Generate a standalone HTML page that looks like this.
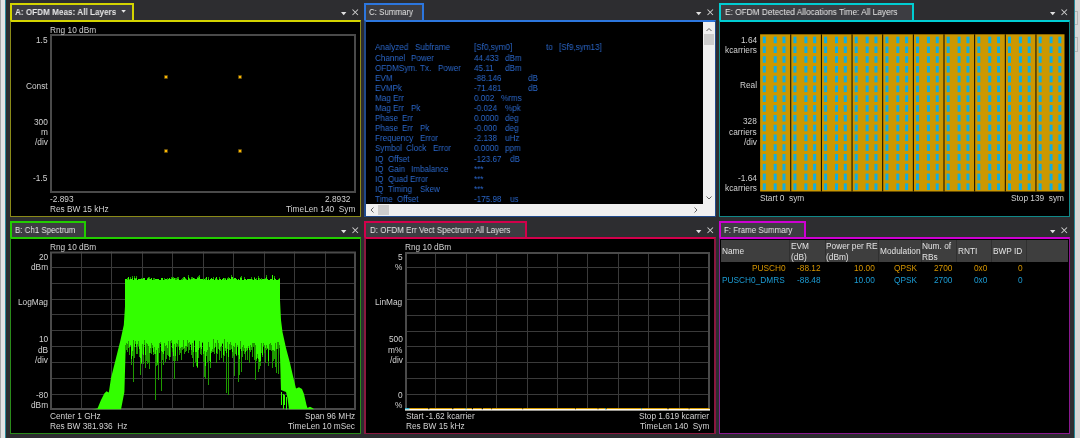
<!DOCTYPE html><html><head><meta charset="utf-8"><style>
*{margin:0;padding:0;box-sizing:border-box}
html,body{width:1080px;height:438px;overflow:hidden;background:#2d2d30;font-family:"Liberation Sans", sans-serif;}
.a{position:absolute}
.t{position:absolute;white-space:pre;line-height:10px;will-change:transform}
.tab{position:absolute;background:#3d3d42}
.ttl{position:absolute;white-space:pre;color:#e8e8e8;font-size:9px;line-height:12px;transform-origin:0 0;will-change:transform}
</style></head><body>

<div class="a" style="left:0;top:0;width:5px;height:438px;background:#e4e4e4;border-left:1px solid #a8a8a8"></div>
<div class="a" style="left:5px;top:0;width:1px;height:438px;background:#2a8a9a"></div>
<div class="a" style="left:1074px;top:0;width:1px;height:438px;background:#2a8a9a"></div>
<div class="a" style="left:1075px;top:0;width:5px;height:438px;background:#d6d6d6"></div>
<div class="a" style="left:1075px;top:11px;width:3px;height:14px;border:1px solid #b4b4b4;border-left:none"></div>
<div class="a" style="left:1075px;top:37px;width:3px;height:15px;border:1px solid #b4b4b4;border-left:none"></div>
<div class="a" style="left:10px;top:20px;width:351px;height:197px;background:#000;border:1px solid #8a8a18;border-top:2px solid #d4d400;border-bottom-width:1px"></div>
<div class="tab" style="left:10px;top:3px;width:124px;height:17px;border:2px solid #d4d400;border-bottom:none;"></div>
<div class="ttl" style="left:14.8px;top:6px;transform:scaleX(0.906);font-weight:bold;">A: OFDM Meas: All Layers</div>
<svg class="a" style="left:340px;top:8px" width="20" height="14"><path d="M1 4 L6.4 4 L3.7 7.2 Z" fill="#e0e0e0"/><path d="M12.5 1.5 L18 7 M18 1.5 L12.5 7" stroke="#d0d0d0" stroke-width="1.05"/></svg>
<svg class="a" style="left:120px;top:9px" width="8" height="6"><path d="M1.3 1 L5.9 1 L3.6 3.8 Z" fill="#e8e8e8"/></svg>
<div class="a" style="left:364px;top:20px;width:352px;height:197px;background:#000;border:2px solid #204a8c;border-top:2px solid #2c76de;border-bottom-width:1px"></div>
<div class="tab" style="left:364px;top:3px;width:60px;height:17px;border:2px solid #2c76de;border-bottom:none;"></div>
<div class="ttl" style="left:368.9px;top:6px;transform:scaleX(0.881);">C: Summary</div>
<svg class="a" style="left:695px;top:8px" width="20" height="14"><path d="M1 4 L6.4 4 L3.7 7.2 Z" fill="#e0e0e0"/><path d="M12.5 1.5 L18 7 M18 1.5 L12.5 7" stroke="#d0d0d0" stroke-width="1.05"/></svg>
<div class="a" style="left:719px;top:20px;width:351px;height:197px;background:#000;border:1px solid #108888;border-top:2px solid #00cdd2;border-bottom-width:1px"></div>
<div class="tab" style="left:719px;top:3px;width:195px;height:17px;border:2px solid #00cdd2;border-bottom:none;"></div>
<div class="ttl" style="left:724.5px;top:6px;transform:scaleX(0.92);">E: OFDM Detected Allocations Time: All Layers</div>
<svg class="a" style="left:1049px;top:8px" width="20" height="14"><path d="M1 4 L6.4 4 L3.7 7.2 Z" fill="#e0e0e0"/><path d="M12.5 1.5 L18 7 M18 1.5 L12.5 7" stroke="#d0d0d0" stroke-width="1.05"/></svg>
<div class="a" style="left:10px;top:237px;width:351px;height:197px;background:#000;border:1px solid #2a8a1a;border-top:2px solid #22cc00;border-bottom-width:1px"></div>
<div class="tab" style="left:10px;top:221px;width:76px;height:16px;border:2px solid #22cc00;border-bottom:none;"></div>
<div class="ttl" style="left:14.8px;top:224px;transform:scaleX(0.88);">B: Ch1 Spectrum</div>
<svg class="a" style="left:340px;top:226px" width="20" height="14"><path d="M1 4 L6.4 4 L3.7 7.2 Z" fill="#e0e0e0"/><path d="M12.5 1.5 L18 7 M18 1.5 L12.5 7" stroke="#d0d0d0" stroke-width="1.05"/></svg>
<div class="a" style="left:364px;top:237px;width:352px;height:197px;background:#000;border:2px solid #8a1840;border-top:2px solid #d2004b;border-bottom-width:1px"></div>
<div class="tab" style="left:364px;top:221px;width:163px;height:16px;border:2px solid #d2004b;border-bottom:none;"></div>
<div class="ttl" style="left:369.7px;top:224px;transform:scaleX(0.891);">D: OFDM Err Vect Spectrum: All Layers</div>
<svg class="a" style="left:695px;top:226px" width="20" height="14"><path d="M1 4 L6.4 4 L3.7 7.2 Z" fill="#e0e0e0"/><path d="M12.5 1.5 L18 7 M18 1.5 L12.5 7" stroke="#d0d0d0" stroke-width="1.05"/></svg>
<div class="a" style="left:719px;top:237px;width:351px;height:197px;background:#000;border:1px solid #8a1890;border-top:2px solid #cd00d2;border-bottom-width:1px"></div>
<div class="tab" style="left:719px;top:221px;width:87px;height:16px;border:2px solid #cd00d2;border-bottom:none;"></div>
<div class="ttl" style="left:724.3px;top:224px;transform:scaleX(0.881);">F: Frame Summary</div>
<svg class="a" style="left:1049px;top:226px" width="20" height="14"><path d="M1 4 L6.4 4 L3.7 7.2 Z" fill="#e0e0e0"/><path d="M12.5 1.5 L18 7 M18 1.5 L12.5 7" stroke="#d0d0d0" stroke-width="1.05"/></svg>
<div class="a" style="left:50px;top:34px;width:306px;height:159px;border:2px solid #4a4a4a"></div>
<div class="a" style="left:163.7px;top:74.7px;width:4px;height:4px;border-radius:1px;background:#6a5008"></div>
<div class="a" style="left:164.7px;top:75.7px;width:2px;height:2px;background:#ffb800"></div>
<div class="a" style="left:238.2px;top:74.7px;width:4px;height:4px;border-radius:1px;background:#6a5008"></div>
<div class="a" style="left:239.2px;top:75.7px;width:2px;height:2px;background:#ffb800"></div>
<div class="a" style="left:163.7px;top:149.2px;width:4px;height:4px;border-radius:1px;background:#6a5008"></div>
<div class="a" style="left:164.7px;top:150.2px;width:2px;height:2px;background:#ffb800"></div>
<div class="a" style="left:238.2px;top:149.2px;width:4px;height:4px;border-radius:1px;background:#6a5008"></div>
<div class="a" style="left:239.2px;top:150.2px;width:2px;height:2px;background:#ffb800"></div>
<div class="t" style="left:50.00px;top:24.82px;font-size:8.3px;color:#d2d2d2;font-weight:normal;">Rng 10 dBm</div>
<div class="t" style="right:1032.30px;top:35.12px;font-size:8.3px;color:#d2d2d2;font-weight:normal;">1.5</div>
<div class="t" style="right:1032.30px;top:80.72px;font-size:8.3px;color:#d2d2d2;font-weight:normal;">Const</div>
<div class="t" style="right:1032.30px;top:116.92px;font-size:8.3px;color:#d2d2d2;font-weight:normal;">300</div>
<div class="t" style="right:1032.30px;top:126.92px;font-size:8.3px;color:#d2d2d2;font-weight:normal;">m</div>
<div class="t" style="right:1032.30px;top:137.02px;font-size:8.3px;color:#d2d2d2;font-weight:normal;">/div</div>
<div class="t" style="right:1032.30px;top:172.72px;font-size:8.3px;color:#d2d2d2;font-weight:normal;">-1.5</div>
<div class="t" style="left:50.30px;top:193.62px;font-size:8.3px;color:#d2d2d2;font-weight:normal;">-2.893</div>
<div class="t" style="left:50.30px;top:203.72px;font-size:8.3px;color:#d2d2d2;font-weight:normal;">Res BW 15 kHz</div>
<div class="t" style="right:730.00px;top:193.62px;font-size:8.3px;color:#d2d2d2;font-weight:normal;">2.8932</div>
<div class="t" style="right:725.00px;top:203.72px;font-size:8.3px;color:#d2d2d2;font-weight:normal;">TimeLen 140  Sym</div>
<div class="a" style="left:366px;top:22px;width:337px;height:182px;overflow:hidden">
<div class="t" style="left:8.60px;top:20.48px;font-size:9px;color:#2a66c8;font-weight:normal;transform:scaleX(0.9);transform-origin:0 0;">Analyzed</div>
<div class="t" style="left:49.10px;top:20.48px;font-size:9px;color:#2a66c8;font-weight:normal;transform:scaleX(0.9);transform-origin:0 0;">Subframe</div>
<div class="t" style="left:107.90px;top:20.48px;font-size:9px;color:#2a66c8;font-weight:normal;transform:scaleX(0.9);transform-origin:0 0;">[Sf0,sym0]</div>
<div class="t" style="left:179.50px;top:20.48px;font-size:9px;color:#2a66c8;font-weight:normal;transform:scaleX(0.9);transform-origin:0 0;">to</div>
<div class="t" style="left:192.80px;top:20.48px;font-size:9px;color:#2a66c8;font-weight:normal;transform:scaleX(0.9);transform-origin:0 0;">[Sf9,sym13]</div>
<div class="t" style="left:8.60px;top:30.58px;font-size:9px;color:#2a66c8;font-weight:normal;transform:scaleX(0.9);transform-origin:0 0;">Channel</div>
<div class="t" style="left:44.90px;top:30.58px;font-size:9px;color:#2a66c8;font-weight:normal;transform:scaleX(0.9);transform-origin:0 0;">Power</div>
<div class="t" style="left:107.90px;top:30.58px;font-size:9px;color:#2a66c8;font-weight:normal;transform:scaleX(0.9);transform-origin:0 0;">44.433</div>
<div class="t" style="left:139.00px;top:30.58px;font-size:9px;color:#2a66c8;font-weight:normal;transform:scaleX(0.9);transform-origin:0 0;">dBm</div>
<div class="t" style="left:8.60px;top:40.68px;font-size:9px;color:#2a66c8;font-weight:normal;transform:scaleX(0.9);transform-origin:0 0;">OFDMSym.</div>
<div class="t" style="left:54.20px;top:40.68px;font-size:9px;color:#2a66c8;font-weight:normal;transform:scaleX(0.9);transform-origin:0 0;">Tx.</div>
<div class="t" style="left:71.90px;top:40.68px;font-size:9px;color:#2a66c8;font-weight:normal;transform:scaleX(0.9);transform-origin:0 0;">Power</div>
<div class="t" style="left:107.90px;top:40.68px;font-size:9px;color:#2a66c8;font-weight:normal;transform:scaleX(0.9);transform-origin:0 0;">45.11</div>
<div class="t" style="left:139.00px;top:40.68px;font-size:9px;color:#2a66c8;font-weight:normal;transform:scaleX(0.9);transform-origin:0 0;">dBm</div>
<div class="t" style="left:8.60px;top:50.78px;font-size:9px;color:#2a66c8;font-weight:normal;transform:scaleX(0.9);transform-origin:0 0;">EVM</div>
<div class="t" style="left:107.90px;top:50.78px;font-size:9px;color:#2a66c8;font-weight:normal;transform:scaleX(0.9);transform-origin:0 0;">-88.146</div>
<div class="t" style="left:161.80px;top:50.78px;font-size:9px;color:#2a66c8;font-weight:normal;transform:scaleX(0.9);transform-origin:0 0;">dB</div>
<div class="t" style="left:8.60px;top:60.88px;font-size:9px;color:#2a66c8;font-weight:normal;transform:scaleX(0.9);transform-origin:0 0;">EVMPk</div>
<div class="t" style="left:107.90px;top:60.88px;font-size:9px;color:#2a66c8;font-weight:normal;transform:scaleX(0.9);transform-origin:0 0;">-71.481</div>
<div class="t" style="left:161.80px;top:60.88px;font-size:9px;color:#2a66c8;font-weight:normal;transform:scaleX(0.9);transform-origin:0 0;">dB</div>
<div class="t" style="left:8.60px;top:70.98px;font-size:9px;color:#2a66c8;font-weight:normal;transform:scaleX(0.9);transform-origin:0 0;">Mag</div>
<div class="t" style="left:26.80px;top:70.98px;font-size:9px;color:#2a66c8;font-weight:normal;transform:scaleX(0.9);transform-origin:0 0;">Err</div>
<div class="t" style="left:107.90px;top:70.98px;font-size:9px;color:#2a66c8;font-weight:normal;transform:scaleX(0.9);transform-origin:0 0;">0.002</div>
<div class="t" style="left:135.30px;top:70.98px;font-size:9px;color:#2a66c8;font-weight:normal;transform:scaleX(0.9);transform-origin:0 0;">%rms</div>
<div class="t" style="left:8.60px;top:81.08px;font-size:9px;color:#2a66c8;font-weight:normal;transform:scaleX(0.9);transform-origin:0 0;">Mag</div>
<div class="t" style="left:26.80px;top:81.08px;font-size:9px;color:#2a66c8;font-weight:normal;transform:scaleX(0.9);transform-origin:0 0;">Err</div>
<div class="t" style="left:44.90px;top:81.08px;font-size:9px;color:#2a66c8;font-weight:normal;transform:scaleX(0.9);transform-origin:0 0;">Pk</div>
<div class="t" style="left:107.90px;top:81.08px;font-size:9px;color:#2a66c8;font-weight:normal;transform:scaleX(0.9);transform-origin:0 0;">-0.024</div>
<div class="t" style="left:139.10px;top:81.08px;font-size:9px;color:#2a66c8;font-weight:normal;transform:scaleX(0.9);transform-origin:0 0;">%pk</div>
<div class="t" style="left:8.60px;top:91.18px;font-size:9px;color:#2a66c8;font-weight:normal;transform:scaleX(0.9);transform-origin:0 0;">Phase</div>
<div class="t" style="left:35.70px;top:91.18px;font-size:9px;color:#2a66c8;font-weight:normal;transform:scaleX(0.9);transform-origin:0 0;">Err</div>
<div class="t" style="left:107.90px;top:91.18px;font-size:9px;color:#2a66c8;font-weight:normal;transform:scaleX(0.9);transform-origin:0 0;">0.0000</div>
<div class="t" style="left:139.10px;top:91.18px;font-size:9px;color:#2a66c8;font-weight:normal;transform:scaleX(0.9);transform-origin:0 0;">deg</div>
<div class="t" style="left:8.60px;top:101.28px;font-size:9px;color:#2a66c8;font-weight:normal;transform:scaleX(0.9);transform-origin:0 0;">Phase</div>
<div class="t" style="left:35.70px;top:101.28px;font-size:9px;color:#2a66c8;font-weight:normal;transform:scaleX(0.9);transform-origin:0 0;">Err</div>
<div class="t" style="left:53.90px;top:101.28px;font-size:9px;color:#2a66c8;font-weight:normal;transform:scaleX(0.9);transform-origin:0 0;">Pk</div>
<div class="t" style="left:107.90px;top:101.28px;font-size:9px;color:#2a66c8;font-weight:normal;transform:scaleX(0.9);transform-origin:0 0;">-0.000</div>
<div class="t" style="left:139.10px;top:101.28px;font-size:9px;color:#2a66c8;font-weight:normal;transform:scaleX(0.9);transform-origin:0 0;">deg</div>
<div class="t" style="left:8.60px;top:111.38px;font-size:9px;color:#2a66c8;font-weight:normal;transform:scaleX(0.9);transform-origin:0 0;">Frequency</div>
<div class="t" style="left:53.70px;top:111.38px;font-size:9px;color:#2a66c8;font-weight:normal;transform:scaleX(0.9);transform-origin:0 0;">Error</div>
<div class="t" style="left:107.90px;top:111.38px;font-size:9px;color:#2a66c8;font-weight:normal;transform:scaleX(0.9);transform-origin:0 0;">-2.138</div>
<div class="t" style="left:139.10px;top:111.38px;font-size:9px;color:#2a66c8;font-weight:normal;transform:scaleX(0.9);transform-origin:0 0;">uHz</div>
<div class="t" style="left:8.60px;top:121.48px;font-size:9px;color:#2a66c8;font-weight:normal;transform:scaleX(0.9);transform-origin:0 0;">Symbol</div>
<div class="t" style="left:40.00px;top:121.48px;font-size:9px;color:#2a66c8;font-weight:normal;transform:scaleX(0.9);transform-origin:0 0;">Clock</div>
<div class="t" style="left:67.00px;top:121.48px;font-size:9px;color:#2a66c8;font-weight:normal;transform:scaleX(0.9);transform-origin:0 0;">Error</div>
<div class="t" style="left:107.90px;top:121.48px;font-size:9px;color:#2a66c8;font-weight:normal;transform:scaleX(0.9);transform-origin:0 0;">0.0000</div>
<div class="t" style="left:139.00px;top:121.48px;font-size:9px;color:#2a66c8;font-weight:normal;transform:scaleX(0.9);transform-origin:0 0;">ppm</div>
<div class="t" style="left:8.60px;top:131.58px;font-size:9px;color:#2a66c8;font-weight:normal;transform:scaleX(0.9);transform-origin:0 0;">IQ</div>
<div class="t" style="left:22.00px;top:131.58px;font-size:9px;color:#2a66c8;font-weight:normal;transform:scaleX(0.9);transform-origin:0 0;">Offset</div>
<div class="t" style="left:107.90px;top:131.58px;font-size:9px;color:#2a66c8;font-weight:normal;transform:scaleX(0.9);transform-origin:0 0;">-123.67</div>
<div class="t" style="left:143.50px;top:131.58px;font-size:9px;color:#2a66c8;font-weight:normal;transform:scaleX(0.9);transform-origin:0 0;">dB</div>
<div class="t" style="left:8.60px;top:141.68px;font-size:9px;color:#2a66c8;font-weight:normal;transform:scaleX(0.9);transform-origin:0 0;">IQ</div>
<div class="t" style="left:22.00px;top:141.68px;font-size:9px;color:#2a66c8;font-weight:normal;transform:scaleX(0.9);transform-origin:0 0;">Gain</div>
<div class="t" style="left:44.60px;top:141.68px;font-size:9px;color:#2a66c8;font-weight:normal;transform:scaleX(0.9);transform-origin:0 0;">Imbalance</div>
<div class="t" style="left:107.90px;top:141.68px;font-size:9px;color:#2a66c8;font-weight:normal;transform:scaleX(0.9);transform-origin:0 0;">***</div>
<div class="t" style="left:8.60px;top:151.78px;font-size:9px;color:#2a66c8;font-weight:normal;transform:scaleX(0.9);transform-origin:0 0;">IQ</div>
<div class="t" style="left:22.00px;top:151.78px;font-size:9px;color:#2a66c8;font-weight:normal;transform:scaleX(0.9);transform-origin:0 0;">Quad</div>
<div class="t" style="left:44.00px;top:151.78px;font-size:9px;color:#2a66c8;font-weight:normal;transform:scaleX(0.9);transform-origin:0 0;">Error</div>
<div class="t" style="left:107.90px;top:151.78px;font-size:9px;color:#2a66c8;font-weight:normal;transform:scaleX(0.9);transform-origin:0 0;">***</div>
<div class="t" style="left:8.60px;top:161.88px;font-size:9px;color:#2a66c8;font-weight:normal;transform:scaleX(0.9);transform-origin:0 0;">IQ</div>
<div class="t" style="left:22.00px;top:161.88px;font-size:9px;color:#2a66c8;font-weight:normal;transform:scaleX(0.9);transform-origin:0 0;">Timing</div>
<div class="t" style="left:53.70px;top:161.88px;font-size:9px;color:#2a66c8;font-weight:normal;transform:scaleX(0.9);transform-origin:0 0;">Skew</div>
<div class="t" style="left:107.90px;top:161.88px;font-size:9px;color:#2a66c8;font-weight:normal;transform:scaleX(0.9);transform-origin:0 0;">***</div>
<div class="t" style="left:8.60px;top:171.98px;font-size:9px;color:#2a66c8;font-weight:normal;transform:scaleX(0.9);transform-origin:0 0;">Time</div>
<div class="t" style="left:31.00px;top:171.98px;font-size:9px;color:#2a66c8;font-weight:normal;transform:scaleX(0.9);transform-origin:0 0;">Offset</div>
<div class="t" style="left:107.90px;top:171.98px;font-size:9px;color:#2a66c8;font-weight:normal;transform:scaleX(0.9);transform-origin:0 0;">-175.98</div>
<div class="t" style="left:143.50px;top:171.98px;font-size:9px;color:#2a66c8;font-weight:normal;transform:scaleX(0.9);transform-origin:0 0;">us</div>
</div>
<div class="a" style="left:703px;top:22px;width:12px;height:182px;background:#f0f0f0"></div>
<div class="a" style="left:704px;top:34px;width:10px;height:11px;background:#cdcdcd"></div>
<svg class="a" style="left:703px;top:22px" width="12" height="182"><path d="M3.5 9 L6 6.5 L8.5 9" stroke="#606060" stroke-width="1" fill="none"/><path d="M3.5 174.5 L6 177 L8.5 174.5" stroke="#606060" stroke-width="1" fill="none"/></svg>
<div class="a" style="left:366px;top:204px;width:349px;height:12px;background:#f0f0f0"></div>
<div class="a" style="left:377.5px;top:205px;width:11.5px;height:10px;background:#cdcdcd"></div>
<svg class="a" style="left:366px;top:204px" width="349" height="12"><path d="M7.5 3.5 L5 6 L7.5 8.5" stroke="#606060" stroke-width="1" fill="none"/><path d="M328.5 3.5 L331 6 L328.5 8.5" stroke="#606060" stroke-width="1" fill="none"/></svg>
<svg class="a" style="left:0;top:0" width="1080" height="438"><rect x="760.1" y="34.3" width="304.4" height="157.2" fill="#cc9800"/><rect x="762.80" y="36.60" width="3" height="6.6" fill="#10aee0"/><rect x="762.80" y="46.39" width="3" height="6.6" fill="#10aee0"/><rect x="762.80" y="56.18" width="3" height="6.6" fill="#10aee0"/><rect x="762.80" y="65.97" width="3" height="6.6" fill="#10aee0"/><rect x="762.80" y="75.76" width="3" height="6.6" fill="#10aee0"/><rect x="762.80" y="85.55" width="3" height="6.6" fill="#10aee0"/><rect x="762.80" y="95.34" width="3" height="6.6" fill="#10aee0"/><rect x="762.80" y="105.13" width="3" height="6.6" fill="#10aee0"/><rect x="762.80" y="114.92" width="3" height="6.6" fill="#10aee0"/><rect x="762.80" y="124.71" width="3" height="6.6" fill="#10aee0"/><rect x="762.80" y="134.50" width="3" height="6.6" fill="#10aee0"/><rect x="762.80" y="144.29" width="3" height="6.6" fill="#10aee0"/><rect x="762.80" y="154.08" width="3" height="6.6" fill="#10aee0"/><rect x="762.80" y="163.87" width="3" height="6.6" fill="#10aee0"/><rect x="762.80" y="173.66" width="3" height="6.6" fill="#10aee0"/><rect x="762.80" y="183.45" width="3" height="6.6" fill="#10aee0"/><rect x="773.70" y="36.60" width="3" height="6.6" fill="#10aee0"/><rect x="773.70" y="46.39" width="3" height="6.6" fill="#10aee0"/><rect x="773.70" y="56.18" width="3" height="6.6" fill="#10aee0"/><rect x="773.70" y="65.97" width="3" height="6.6" fill="#10aee0"/><rect x="773.70" y="75.76" width="3" height="6.6" fill="#10aee0"/><rect x="773.70" y="85.55" width="3" height="6.6" fill="#10aee0"/><rect x="773.70" y="95.34" width="3" height="6.6" fill="#10aee0"/><rect x="773.70" y="105.13" width="3" height="6.6" fill="#10aee0"/><rect x="773.70" y="114.92" width="3" height="6.6" fill="#10aee0"/><rect x="773.70" y="124.71" width="3" height="6.6" fill="#10aee0"/><rect x="773.70" y="134.50" width="3" height="6.6" fill="#10aee0"/><rect x="773.70" y="144.29" width="3" height="6.6" fill="#10aee0"/><rect x="773.70" y="154.08" width="3" height="6.6" fill="#10aee0"/><rect x="773.70" y="163.87" width="3" height="6.6" fill="#10aee0"/><rect x="773.70" y="173.66" width="3" height="6.6" fill="#10aee0"/><rect x="773.70" y="183.45" width="3" height="6.6" fill="#10aee0"/><rect x="782.50" y="36.60" width="3" height="6.6" fill="#10aee0"/><rect x="782.50" y="46.39" width="3" height="6.6" fill="#10aee0"/><rect x="782.50" y="56.18" width="3" height="6.6" fill="#10aee0"/><rect x="782.50" y="65.97" width="3" height="6.6" fill="#10aee0"/><rect x="782.50" y="75.76" width="3" height="6.6" fill="#10aee0"/><rect x="782.50" y="85.55" width="3" height="6.6" fill="#10aee0"/><rect x="782.50" y="95.34" width="3" height="6.6" fill="#10aee0"/><rect x="782.50" y="105.13" width="3" height="6.6" fill="#10aee0"/><rect x="782.50" y="114.92" width="3" height="6.6" fill="#10aee0"/><rect x="782.50" y="124.71" width="3" height="6.6" fill="#10aee0"/><rect x="782.50" y="134.50" width="3" height="6.6" fill="#10aee0"/><rect x="782.50" y="144.29" width="3" height="6.6" fill="#10aee0"/><rect x="782.50" y="154.08" width="3" height="6.6" fill="#10aee0"/><rect x="782.50" y="163.87" width="3" height="6.6" fill="#10aee0"/><rect x="782.50" y="173.66" width="3" height="6.6" fill="#10aee0"/><rect x="782.50" y="183.45" width="3" height="6.6" fill="#10aee0"/><rect x="790.25" y="34.3" width="1" height="157.2" fill="#080500"/><rect x="793.45" y="36.60" width="3" height="6.6" fill="#10aee0"/><rect x="793.45" y="46.39" width="3" height="6.6" fill="#10aee0"/><rect x="793.45" y="56.18" width="3" height="6.6" fill="#10aee0"/><rect x="793.45" y="65.97" width="3" height="6.6" fill="#10aee0"/><rect x="793.45" y="75.76" width="3" height="6.6" fill="#10aee0"/><rect x="793.45" y="85.55" width="3" height="6.6" fill="#10aee0"/><rect x="793.45" y="95.34" width="3" height="6.6" fill="#10aee0"/><rect x="793.45" y="105.13" width="3" height="6.6" fill="#10aee0"/><rect x="793.45" y="114.92" width="3" height="6.6" fill="#10aee0"/><rect x="793.45" y="124.71" width="3" height="6.6" fill="#10aee0"/><rect x="793.45" y="134.50" width="3" height="6.6" fill="#10aee0"/><rect x="793.45" y="144.29" width="3" height="6.6" fill="#10aee0"/><rect x="793.45" y="154.08" width="3" height="6.6" fill="#10aee0"/><rect x="793.45" y="163.87" width="3" height="6.6" fill="#10aee0"/><rect x="793.45" y="173.66" width="3" height="6.6" fill="#10aee0"/><rect x="793.45" y="183.45" width="3" height="6.6" fill="#10aee0"/><rect x="804.35" y="36.60" width="3" height="6.6" fill="#10aee0"/><rect x="804.35" y="46.39" width="3" height="6.6" fill="#10aee0"/><rect x="804.35" y="56.18" width="3" height="6.6" fill="#10aee0"/><rect x="804.35" y="65.97" width="3" height="6.6" fill="#10aee0"/><rect x="804.35" y="75.76" width="3" height="6.6" fill="#10aee0"/><rect x="804.35" y="85.55" width="3" height="6.6" fill="#10aee0"/><rect x="804.35" y="95.34" width="3" height="6.6" fill="#10aee0"/><rect x="804.35" y="105.13" width="3" height="6.6" fill="#10aee0"/><rect x="804.35" y="114.92" width="3" height="6.6" fill="#10aee0"/><rect x="804.35" y="124.71" width="3" height="6.6" fill="#10aee0"/><rect x="804.35" y="134.50" width="3" height="6.6" fill="#10aee0"/><rect x="804.35" y="144.29" width="3" height="6.6" fill="#10aee0"/><rect x="804.35" y="154.08" width="3" height="6.6" fill="#10aee0"/><rect x="804.35" y="163.87" width="3" height="6.6" fill="#10aee0"/><rect x="804.35" y="173.66" width="3" height="6.6" fill="#10aee0"/><rect x="804.35" y="183.45" width="3" height="6.6" fill="#10aee0"/><rect x="813.15" y="36.60" width="3" height="6.6" fill="#10aee0"/><rect x="813.15" y="46.39" width="3" height="6.6" fill="#10aee0"/><rect x="813.15" y="56.18" width="3" height="6.6" fill="#10aee0"/><rect x="813.15" y="65.97" width="3" height="6.6" fill="#10aee0"/><rect x="813.15" y="75.76" width="3" height="6.6" fill="#10aee0"/><rect x="813.15" y="85.55" width="3" height="6.6" fill="#10aee0"/><rect x="813.15" y="95.34" width="3" height="6.6" fill="#10aee0"/><rect x="813.15" y="105.13" width="3" height="6.6" fill="#10aee0"/><rect x="813.15" y="114.92" width="3" height="6.6" fill="#10aee0"/><rect x="813.15" y="124.71" width="3" height="6.6" fill="#10aee0"/><rect x="813.15" y="134.50" width="3" height="6.6" fill="#10aee0"/><rect x="813.15" y="144.29" width="3" height="6.6" fill="#10aee0"/><rect x="813.15" y="154.08" width="3" height="6.6" fill="#10aee0"/><rect x="813.15" y="163.87" width="3" height="6.6" fill="#10aee0"/><rect x="813.15" y="173.66" width="3" height="6.6" fill="#10aee0"/><rect x="813.15" y="183.45" width="3" height="6.6" fill="#10aee0"/><rect x="820.90" y="34.3" width="1" height="157.2" fill="#080500"/><rect x="824.10" y="36.60" width="3" height="6.6" fill="#10aee0"/><rect x="824.10" y="46.39" width="3" height="6.6" fill="#10aee0"/><rect x="824.10" y="56.18" width="3" height="6.6" fill="#10aee0"/><rect x="824.10" y="65.97" width="3" height="6.6" fill="#10aee0"/><rect x="824.10" y="75.76" width="3" height="6.6" fill="#10aee0"/><rect x="824.10" y="85.55" width="3" height="6.6" fill="#10aee0"/><rect x="824.10" y="95.34" width="3" height="6.6" fill="#10aee0"/><rect x="824.10" y="105.13" width="3" height="6.6" fill="#10aee0"/><rect x="824.10" y="114.92" width="3" height="6.6" fill="#10aee0"/><rect x="824.10" y="124.71" width="3" height="6.6" fill="#10aee0"/><rect x="824.10" y="134.50" width="3" height="6.6" fill="#10aee0"/><rect x="824.10" y="144.29" width="3" height="6.6" fill="#10aee0"/><rect x="824.10" y="154.08" width="3" height="6.6" fill="#10aee0"/><rect x="824.10" y="163.87" width="3" height="6.6" fill="#10aee0"/><rect x="824.10" y="173.66" width="3" height="6.6" fill="#10aee0"/><rect x="824.10" y="183.45" width="3" height="6.6" fill="#10aee0"/><rect x="835.00" y="36.60" width="3" height="6.6" fill="#10aee0"/><rect x="835.00" y="46.39" width="3" height="6.6" fill="#10aee0"/><rect x="835.00" y="56.18" width="3" height="6.6" fill="#10aee0"/><rect x="835.00" y="65.97" width="3" height="6.6" fill="#10aee0"/><rect x="835.00" y="75.76" width="3" height="6.6" fill="#10aee0"/><rect x="835.00" y="85.55" width="3" height="6.6" fill="#10aee0"/><rect x="835.00" y="95.34" width="3" height="6.6" fill="#10aee0"/><rect x="835.00" y="105.13" width="3" height="6.6" fill="#10aee0"/><rect x="835.00" y="114.92" width="3" height="6.6" fill="#10aee0"/><rect x="835.00" y="124.71" width="3" height="6.6" fill="#10aee0"/><rect x="835.00" y="134.50" width="3" height="6.6" fill="#10aee0"/><rect x="835.00" y="144.29" width="3" height="6.6" fill="#10aee0"/><rect x="835.00" y="154.08" width="3" height="6.6" fill="#10aee0"/><rect x="835.00" y="163.87" width="3" height="6.6" fill="#10aee0"/><rect x="835.00" y="173.66" width="3" height="6.6" fill="#10aee0"/><rect x="835.00" y="183.45" width="3" height="6.6" fill="#10aee0"/><rect x="843.80" y="36.60" width="3" height="6.6" fill="#10aee0"/><rect x="843.80" y="46.39" width="3" height="6.6" fill="#10aee0"/><rect x="843.80" y="56.18" width="3" height="6.6" fill="#10aee0"/><rect x="843.80" y="65.97" width="3" height="6.6" fill="#10aee0"/><rect x="843.80" y="75.76" width="3" height="6.6" fill="#10aee0"/><rect x="843.80" y="85.55" width="3" height="6.6" fill="#10aee0"/><rect x="843.80" y="95.34" width="3" height="6.6" fill="#10aee0"/><rect x="843.80" y="105.13" width="3" height="6.6" fill="#10aee0"/><rect x="843.80" y="114.92" width="3" height="6.6" fill="#10aee0"/><rect x="843.80" y="124.71" width="3" height="6.6" fill="#10aee0"/><rect x="843.80" y="134.50" width="3" height="6.6" fill="#10aee0"/><rect x="843.80" y="144.29" width="3" height="6.6" fill="#10aee0"/><rect x="843.80" y="154.08" width="3" height="6.6" fill="#10aee0"/><rect x="843.80" y="163.87" width="3" height="6.6" fill="#10aee0"/><rect x="843.80" y="173.66" width="3" height="6.6" fill="#10aee0"/><rect x="843.80" y="183.45" width="3" height="6.6" fill="#10aee0"/><rect x="851.55" y="34.3" width="1" height="157.2" fill="#080500"/><rect x="854.75" y="36.60" width="3" height="6.6" fill="#10aee0"/><rect x="854.75" y="46.39" width="3" height="6.6" fill="#10aee0"/><rect x="854.75" y="56.18" width="3" height="6.6" fill="#10aee0"/><rect x="854.75" y="65.97" width="3" height="6.6" fill="#10aee0"/><rect x="854.75" y="75.76" width="3" height="6.6" fill="#10aee0"/><rect x="854.75" y="85.55" width="3" height="6.6" fill="#10aee0"/><rect x="854.75" y="95.34" width="3" height="6.6" fill="#10aee0"/><rect x="854.75" y="105.13" width="3" height="6.6" fill="#10aee0"/><rect x="854.75" y="114.92" width="3" height="6.6" fill="#10aee0"/><rect x="854.75" y="124.71" width="3" height="6.6" fill="#10aee0"/><rect x="854.75" y="134.50" width="3" height="6.6" fill="#10aee0"/><rect x="854.75" y="144.29" width="3" height="6.6" fill="#10aee0"/><rect x="854.75" y="154.08" width="3" height="6.6" fill="#10aee0"/><rect x="854.75" y="163.87" width="3" height="6.6" fill="#10aee0"/><rect x="854.75" y="173.66" width="3" height="6.6" fill="#10aee0"/><rect x="854.75" y="183.45" width="3" height="6.6" fill="#10aee0"/><rect x="865.65" y="36.60" width="3" height="6.6" fill="#10aee0"/><rect x="865.65" y="46.39" width="3" height="6.6" fill="#10aee0"/><rect x="865.65" y="56.18" width="3" height="6.6" fill="#10aee0"/><rect x="865.65" y="65.97" width="3" height="6.6" fill="#10aee0"/><rect x="865.65" y="75.76" width="3" height="6.6" fill="#10aee0"/><rect x="865.65" y="85.55" width="3" height="6.6" fill="#10aee0"/><rect x="865.65" y="95.34" width="3" height="6.6" fill="#10aee0"/><rect x="865.65" y="105.13" width="3" height="6.6" fill="#10aee0"/><rect x="865.65" y="114.92" width="3" height="6.6" fill="#10aee0"/><rect x="865.65" y="124.71" width="3" height="6.6" fill="#10aee0"/><rect x="865.65" y="134.50" width="3" height="6.6" fill="#10aee0"/><rect x="865.65" y="144.29" width="3" height="6.6" fill="#10aee0"/><rect x="865.65" y="154.08" width="3" height="6.6" fill="#10aee0"/><rect x="865.65" y="163.87" width="3" height="6.6" fill="#10aee0"/><rect x="865.65" y="173.66" width="3" height="6.6" fill="#10aee0"/><rect x="865.65" y="183.45" width="3" height="6.6" fill="#10aee0"/><rect x="874.45" y="36.60" width="3" height="6.6" fill="#10aee0"/><rect x="874.45" y="46.39" width="3" height="6.6" fill="#10aee0"/><rect x="874.45" y="56.18" width="3" height="6.6" fill="#10aee0"/><rect x="874.45" y="65.97" width="3" height="6.6" fill="#10aee0"/><rect x="874.45" y="75.76" width="3" height="6.6" fill="#10aee0"/><rect x="874.45" y="85.55" width="3" height="6.6" fill="#10aee0"/><rect x="874.45" y="95.34" width="3" height="6.6" fill="#10aee0"/><rect x="874.45" y="105.13" width="3" height="6.6" fill="#10aee0"/><rect x="874.45" y="114.92" width="3" height="6.6" fill="#10aee0"/><rect x="874.45" y="124.71" width="3" height="6.6" fill="#10aee0"/><rect x="874.45" y="134.50" width="3" height="6.6" fill="#10aee0"/><rect x="874.45" y="144.29" width="3" height="6.6" fill="#10aee0"/><rect x="874.45" y="154.08" width="3" height="6.6" fill="#10aee0"/><rect x="874.45" y="163.87" width="3" height="6.6" fill="#10aee0"/><rect x="874.45" y="173.66" width="3" height="6.6" fill="#10aee0"/><rect x="874.45" y="183.45" width="3" height="6.6" fill="#10aee0"/><rect x="882.20" y="34.3" width="1" height="157.2" fill="#080500"/><rect x="885.40" y="36.60" width="3" height="6.6" fill="#10aee0"/><rect x="885.40" y="46.39" width="3" height="6.6" fill="#10aee0"/><rect x="885.40" y="56.18" width="3" height="6.6" fill="#10aee0"/><rect x="885.40" y="65.97" width="3" height="6.6" fill="#10aee0"/><rect x="885.40" y="75.76" width="3" height="6.6" fill="#10aee0"/><rect x="885.40" y="85.55" width="3" height="6.6" fill="#10aee0"/><rect x="885.40" y="95.34" width="3" height="6.6" fill="#10aee0"/><rect x="885.40" y="105.13" width="3" height="6.6" fill="#10aee0"/><rect x="885.40" y="114.92" width="3" height="6.6" fill="#10aee0"/><rect x="885.40" y="124.71" width="3" height="6.6" fill="#10aee0"/><rect x="885.40" y="134.50" width="3" height="6.6" fill="#10aee0"/><rect x="885.40" y="144.29" width="3" height="6.6" fill="#10aee0"/><rect x="885.40" y="154.08" width="3" height="6.6" fill="#10aee0"/><rect x="885.40" y="163.87" width="3" height="6.6" fill="#10aee0"/><rect x="885.40" y="173.66" width="3" height="6.6" fill="#10aee0"/><rect x="885.40" y="183.45" width="3" height="6.6" fill="#10aee0"/><rect x="896.30" y="36.60" width="3" height="6.6" fill="#10aee0"/><rect x="896.30" y="46.39" width="3" height="6.6" fill="#10aee0"/><rect x="896.30" y="56.18" width="3" height="6.6" fill="#10aee0"/><rect x="896.30" y="65.97" width="3" height="6.6" fill="#10aee0"/><rect x="896.30" y="75.76" width="3" height="6.6" fill="#10aee0"/><rect x="896.30" y="85.55" width="3" height="6.6" fill="#10aee0"/><rect x="896.30" y="95.34" width="3" height="6.6" fill="#10aee0"/><rect x="896.30" y="105.13" width="3" height="6.6" fill="#10aee0"/><rect x="896.30" y="114.92" width="3" height="6.6" fill="#10aee0"/><rect x="896.30" y="124.71" width="3" height="6.6" fill="#10aee0"/><rect x="896.30" y="134.50" width="3" height="6.6" fill="#10aee0"/><rect x="896.30" y="144.29" width="3" height="6.6" fill="#10aee0"/><rect x="896.30" y="154.08" width="3" height="6.6" fill="#10aee0"/><rect x="896.30" y="163.87" width="3" height="6.6" fill="#10aee0"/><rect x="896.30" y="173.66" width="3" height="6.6" fill="#10aee0"/><rect x="896.30" y="183.45" width="3" height="6.6" fill="#10aee0"/><rect x="905.10" y="36.60" width="3" height="6.6" fill="#10aee0"/><rect x="905.10" y="46.39" width="3" height="6.6" fill="#10aee0"/><rect x="905.10" y="56.18" width="3" height="6.6" fill="#10aee0"/><rect x="905.10" y="65.97" width="3" height="6.6" fill="#10aee0"/><rect x="905.10" y="75.76" width="3" height="6.6" fill="#10aee0"/><rect x="905.10" y="85.55" width="3" height="6.6" fill="#10aee0"/><rect x="905.10" y="95.34" width="3" height="6.6" fill="#10aee0"/><rect x="905.10" y="105.13" width="3" height="6.6" fill="#10aee0"/><rect x="905.10" y="114.92" width="3" height="6.6" fill="#10aee0"/><rect x="905.10" y="124.71" width="3" height="6.6" fill="#10aee0"/><rect x="905.10" y="134.50" width="3" height="6.6" fill="#10aee0"/><rect x="905.10" y="144.29" width="3" height="6.6" fill="#10aee0"/><rect x="905.10" y="154.08" width="3" height="6.6" fill="#10aee0"/><rect x="905.10" y="163.87" width="3" height="6.6" fill="#10aee0"/><rect x="905.10" y="173.66" width="3" height="6.6" fill="#10aee0"/><rect x="905.10" y="183.45" width="3" height="6.6" fill="#10aee0"/><rect x="912.85" y="34.3" width="1" height="157.2" fill="#080500"/><rect x="916.05" y="36.60" width="3" height="6.6" fill="#10aee0"/><rect x="916.05" y="46.39" width="3" height="6.6" fill="#10aee0"/><rect x="916.05" y="56.18" width="3" height="6.6" fill="#10aee0"/><rect x="916.05" y="65.97" width="3" height="6.6" fill="#10aee0"/><rect x="916.05" y="75.76" width="3" height="6.6" fill="#10aee0"/><rect x="916.05" y="85.55" width="3" height="6.6" fill="#10aee0"/><rect x="916.05" y="95.34" width="3" height="6.6" fill="#10aee0"/><rect x="916.05" y="105.13" width="3" height="6.6" fill="#10aee0"/><rect x="916.05" y="114.92" width="3" height="6.6" fill="#10aee0"/><rect x="916.05" y="124.71" width="3" height="6.6" fill="#10aee0"/><rect x="916.05" y="134.50" width="3" height="6.6" fill="#10aee0"/><rect x="916.05" y="144.29" width="3" height="6.6" fill="#10aee0"/><rect x="916.05" y="154.08" width="3" height="6.6" fill="#10aee0"/><rect x="916.05" y="163.87" width="3" height="6.6" fill="#10aee0"/><rect x="916.05" y="173.66" width="3" height="6.6" fill="#10aee0"/><rect x="916.05" y="183.45" width="3" height="6.6" fill="#10aee0"/><rect x="926.95" y="36.60" width="3" height="6.6" fill="#10aee0"/><rect x="926.95" y="46.39" width="3" height="6.6" fill="#10aee0"/><rect x="926.95" y="56.18" width="3" height="6.6" fill="#10aee0"/><rect x="926.95" y="65.97" width="3" height="6.6" fill="#10aee0"/><rect x="926.95" y="75.76" width="3" height="6.6" fill="#10aee0"/><rect x="926.95" y="85.55" width="3" height="6.6" fill="#10aee0"/><rect x="926.95" y="95.34" width="3" height="6.6" fill="#10aee0"/><rect x="926.95" y="105.13" width="3" height="6.6" fill="#10aee0"/><rect x="926.95" y="114.92" width="3" height="6.6" fill="#10aee0"/><rect x="926.95" y="124.71" width="3" height="6.6" fill="#10aee0"/><rect x="926.95" y="134.50" width="3" height="6.6" fill="#10aee0"/><rect x="926.95" y="144.29" width="3" height="6.6" fill="#10aee0"/><rect x="926.95" y="154.08" width="3" height="6.6" fill="#10aee0"/><rect x="926.95" y="163.87" width="3" height="6.6" fill="#10aee0"/><rect x="926.95" y="173.66" width="3" height="6.6" fill="#10aee0"/><rect x="926.95" y="183.45" width="3" height="6.6" fill="#10aee0"/><rect x="935.75" y="36.60" width="3" height="6.6" fill="#10aee0"/><rect x="935.75" y="46.39" width="3" height="6.6" fill="#10aee0"/><rect x="935.75" y="56.18" width="3" height="6.6" fill="#10aee0"/><rect x="935.75" y="65.97" width="3" height="6.6" fill="#10aee0"/><rect x="935.75" y="75.76" width="3" height="6.6" fill="#10aee0"/><rect x="935.75" y="85.55" width="3" height="6.6" fill="#10aee0"/><rect x="935.75" y="95.34" width="3" height="6.6" fill="#10aee0"/><rect x="935.75" y="105.13" width="3" height="6.6" fill="#10aee0"/><rect x="935.75" y="114.92" width="3" height="6.6" fill="#10aee0"/><rect x="935.75" y="124.71" width="3" height="6.6" fill="#10aee0"/><rect x="935.75" y="134.50" width="3" height="6.6" fill="#10aee0"/><rect x="935.75" y="144.29" width="3" height="6.6" fill="#10aee0"/><rect x="935.75" y="154.08" width="3" height="6.6" fill="#10aee0"/><rect x="935.75" y="163.87" width="3" height="6.6" fill="#10aee0"/><rect x="935.75" y="173.66" width="3" height="6.6" fill="#10aee0"/><rect x="935.75" y="183.45" width="3" height="6.6" fill="#10aee0"/><rect x="943.50" y="34.3" width="1" height="157.2" fill="#080500"/><rect x="946.70" y="36.60" width="3" height="6.6" fill="#10aee0"/><rect x="946.70" y="46.39" width="3" height="6.6" fill="#10aee0"/><rect x="946.70" y="56.18" width="3" height="6.6" fill="#10aee0"/><rect x="946.70" y="65.97" width="3" height="6.6" fill="#10aee0"/><rect x="946.70" y="75.76" width="3" height="6.6" fill="#10aee0"/><rect x="946.70" y="85.55" width="3" height="6.6" fill="#10aee0"/><rect x="946.70" y="95.34" width="3" height="6.6" fill="#10aee0"/><rect x="946.70" y="105.13" width="3" height="6.6" fill="#10aee0"/><rect x="946.70" y="114.92" width="3" height="6.6" fill="#10aee0"/><rect x="946.70" y="124.71" width="3" height="6.6" fill="#10aee0"/><rect x="946.70" y="134.50" width="3" height="6.6" fill="#10aee0"/><rect x="946.70" y="144.29" width="3" height="6.6" fill="#10aee0"/><rect x="946.70" y="154.08" width="3" height="6.6" fill="#10aee0"/><rect x="946.70" y="163.87" width="3" height="6.6" fill="#10aee0"/><rect x="946.70" y="173.66" width="3" height="6.6" fill="#10aee0"/><rect x="946.70" y="183.45" width="3" height="6.6" fill="#10aee0"/><rect x="957.60" y="36.60" width="3" height="6.6" fill="#10aee0"/><rect x="957.60" y="46.39" width="3" height="6.6" fill="#10aee0"/><rect x="957.60" y="56.18" width="3" height="6.6" fill="#10aee0"/><rect x="957.60" y="65.97" width="3" height="6.6" fill="#10aee0"/><rect x="957.60" y="75.76" width="3" height="6.6" fill="#10aee0"/><rect x="957.60" y="85.55" width="3" height="6.6" fill="#10aee0"/><rect x="957.60" y="95.34" width="3" height="6.6" fill="#10aee0"/><rect x="957.60" y="105.13" width="3" height="6.6" fill="#10aee0"/><rect x="957.60" y="114.92" width="3" height="6.6" fill="#10aee0"/><rect x="957.60" y="124.71" width="3" height="6.6" fill="#10aee0"/><rect x="957.60" y="134.50" width="3" height="6.6" fill="#10aee0"/><rect x="957.60" y="144.29" width="3" height="6.6" fill="#10aee0"/><rect x="957.60" y="154.08" width="3" height="6.6" fill="#10aee0"/><rect x="957.60" y="163.87" width="3" height="6.6" fill="#10aee0"/><rect x="957.60" y="173.66" width="3" height="6.6" fill="#10aee0"/><rect x="957.60" y="183.45" width="3" height="6.6" fill="#10aee0"/><rect x="966.40" y="36.60" width="3" height="6.6" fill="#10aee0"/><rect x="966.40" y="46.39" width="3" height="6.6" fill="#10aee0"/><rect x="966.40" y="56.18" width="3" height="6.6" fill="#10aee0"/><rect x="966.40" y="65.97" width="3" height="6.6" fill="#10aee0"/><rect x="966.40" y="75.76" width="3" height="6.6" fill="#10aee0"/><rect x="966.40" y="85.55" width="3" height="6.6" fill="#10aee0"/><rect x="966.40" y="95.34" width="3" height="6.6" fill="#10aee0"/><rect x="966.40" y="105.13" width="3" height="6.6" fill="#10aee0"/><rect x="966.40" y="114.92" width="3" height="6.6" fill="#10aee0"/><rect x="966.40" y="124.71" width="3" height="6.6" fill="#10aee0"/><rect x="966.40" y="134.50" width="3" height="6.6" fill="#10aee0"/><rect x="966.40" y="144.29" width="3" height="6.6" fill="#10aee0"/><rect x="966.40" y="154.08" width="3" height="6.6" fill="#10aee0"/><rect x="966.40" y="163.87" width="3" height="6.6" fill="#10aee0"/><rect x="966.40" y="173.66" width="3" height="6.6" fill="#10aee0"/><rect x="966.40" y="183.45" width="3" height="6.6" fill="#10aee0"/><rect x="974.15" y="34.3" width="1" height="157.2" fill="#080500"/><rect x="977.35" y="36.60" width="3" height="6.6" fill="#10aee0"/><rect x="977.35" y="46.39" width="3" height="6.6" fill="#10aee0"/><rect x="977.35" y="56.18" width="3" height="6.6" fill="#10aee0"/><rect x="977.35" y="65.97" width="3" height="6.6" fill="#10aee0"/><rect x="977.35" y="75.76" width="3" height="6.6" fill="#10aee0"/><rect x="977.35" y="85.55" width="3" height="6.6" fill="#10aee0"/><rect x="977.35" y="95.34" width="3" height="6.6" fill="#10aee0"/><rect x="977.35" y="105.13" width="3" height="6.6" fill="#10aee0"/><rect x="977.35" y="114.92" width="3" height="6.6" fill="#10aee0"/><rect x="977.35" y="124.71" width="3" height="6.6" fill="#10aee0"/><rect x="977.35" y="134.50" width="3" height="6.6" fill="#10aee0"/><rect x="977.35" y="144.29" width="3" height="6.6" fill="#10aee0"/><rect x="977.35" y="154.08" width="3" height="6.6" fill="#10aee0"/><rect x="977.35" y="163.87" width="3" height="6.6" fill="#10aee0"/><rect x="977.35" y="173.66" width="3" height="6.6" fill="#10aee0"/><rect x="977.35" y="183.45" width="3" height="6.6" fill="#10aee0"/><rect x="988.25" y="36.60" width="3" height="6.6" fill="#10aee0"/><rect x="988.25" y="46.39" width="3" height="6.6" fill="#10aee0"/><rect x="988.25" y="56.18" width="3" height="6.6" fill="#10aee0"/><rect x="988.25" y="65.97" width="3" height="6.6" fill="#10aee0"/><rect x="988.25" y="75.76" width="3" height="6.6" fill="#10aee0"/><rect x="988.25" y="85.55" width="3" height="6.6" fill="#10aee0"/><rect x="988.25" y="95.34" width="3" height="6.6" fill="#10aee0"/><rect x="988.25" y="105.13" width="3" height="6.6" fill="#10aee0"/><rect x="988.25" y="114.92" width="3" height="6.6" fill="#10aee0"/><rect x="988.25" y="124.71" width="3" height="6.6" fill="#10aee0"/><rect x="988.25" y="134.50" width="3" height="6.6" fill="#10aee0"/><rect x="988.25" y="144.29" width="3" height="6.6" fill="#10aee0"/><rect x="988.25" y="154.08" width="3" height="6.6" fill="#10aee0"/><rect x="988.25" y="163.87" width="3" height="6.6" fill="#10aee0"/><rect x="988.25" y="173.66" width="3" height="6.6" fill="#10aee0"/><rect x="988.25" y="183.45" width="3" height="6.6" fill="#10aee0"/><rect x="997.05" y="36.60" width="3" height="6.6" fill="#10aee0"/><rect x="997.05" y="46.39" width="3" height="6.6" fill="#10aee0"/><rect x="997.05" y="56.18" width="3" height="6.6" fill="#10aee0"/><rect x="997.05" y="65.97" width="3" height="6.6" fill="#10aee0"/><rect x="997.05" y="75.76" width="3" height="6.6" fill="#10aee0"/><rect x="997.05" y="85.55" width="3" height="6.6" fill="#10aee0"/><rect x="997.05" y="95.34" width="3" height="6.6" fill="#10aee0"/><rect x="997.05" y="105.13" width="3" height="6.6" fill="#10aee0"/><rect x="997.05" y="114.92" width="3" height="6.6" fill="#10aee0"/><rect x="997.05" y="124.71" width="3" height="6.6" fill="#10aee0"/><rect x="997.05" y="134.50" width="3" height="6.6" fill="#10aee0"/><rect x="997.05" y="144.29" width="3" height="6.6" fill="#10aee0"/><rect x="997.05" y="154.08" width="3" height="6.6" fill="#10aee0"/><rect x="997.05" y="163.87" width="3" height="6.6" fill="#10aee0"/><rect x="997.05" y="173.66" width="3" height="6.6" fill="#10aee0"/><rect x="997.05" y="183.45" width="3" height="6.6" fill="#10aee0"/><rect x="1004.80" y="34.3" width="1" height="157.2" fill="#080500"/><rect x="1008.00" y="36.60" width="3" height="6.6" fill="#10aee0"/><rect x="1008.00" y="46.39" width="3" height="6.6" fill="#10aee0"/><rect x="1008.00" y="56.18" width="3" height="6.6" fill="#10aee0"/><rect x="1008.00" y="65.97" width="3" height="6.6" fill="#10aee0"/><rect x="1008.00" y="75.76" width="3" height="6.6" fill="#10aee0"/><rect x="1008.00" y="85.55" width="3" height="6.6" fill="#10aee0"/><rect x="1008.00" y="95.34" width="3" height="6.6" fill="#10aee0"/><rect x="1008.00" y="105.13" width="3" height="6.6" fill="#10aee0"/><rect x="1008.00" y="114.92" width="3" height="6.6" fill="#10aee0"/><rect x="1008.00" y="124.71" width="3" height="6.6" fill="#10aee0"/><rect x="1008.00" y="134.50" width="3" height="6.6" fill="#10aee0"/><rect x="1008.00" y="144.29" width="3" height="6.6" fill="#10aee0"/><rect x="1008.00" y="154.08" width="3" height="6.6" fill="#10aee0"/><rect x="1008.00" y="163.87" width="3" height="6.6" fill="#10aee0"/><rect x="1008.00" y="173.66" width="3" height="6.6" fill="#10aee0"/><rect x="1008.00" y="183.45" width="3" height="6.6" fill="#10aee0"/><rect x="1018.90" y="36.60" width="3" height="6.6" fill="#10aee0"/><rect x="1018.90" y="46.39" width="3" height="6.6" fill="#10aee0"/><rect x="1018.90" y="56.18" width="3" height="6.6" fill="#10aee0"/><rect x="1018.90" y="65.97" width="3" height="6.6" fill="#10aee0"/><rect x="1018.90" y="75.76" width="3" height="6.6" fill="#10aee0"/><rect x="1018.90" y="85.55" width="3" height="6.6" fill="#10aee0"/><rect x="1018.90" y="95.34" width="3" height="6.6" fill="#10aee0"/><rect x="1018.90" y="105.13" width="3" height="6.6" fill="#10aee0"/><rect x="1018.90" y="114.92" width="3" height="6.6" fill="#10aee0"/><rect x="1018.90" y="124.71" width="3" height="6.6" fill="#10aee0"/><rect x="1018.90" y="134.50" width="3" height="6.6" fill="#10aee0"/><rect x="1018.90" y="144.29" width="3" height="6.6" fill="#10aee0"/><rect x="1018.90" y="154.08" width="3" height="6.6" fill="#10aee0"/><rect x="1018.90" y="163.87" width="3" height="6.6" fill="#10aee0"/><rect x="1018.90" y="173.66" width="3" height="6.6" fill="#10aee0"/><rect x="1018.90" y="183.45" width="3" height="6.6" fill="#10aee0"/><rect x="1027.70" y="36.60" width="3" height="6.6" fill="#10aee0"/><rect x="1027.70" y="46.39" width="3" height="6.6" fill="#10aee0"/><rect x="1027.70" y="56.18" width="3" height="6.6" fill="#10aee0"/><rect x="1027.70" y="65.97" width="3" height="6.6" fill="#10aee0"/><rect x="1027.70" y="75.76" width="3" height="6.6" fill="#10aee0"/><rect x="1027.70" y="85.55" width="3" height="6.6" fill="#10aee0"/><rect x="1027.70" y="95.34" width="3" height="6.6" fill="#10aee0"/><rect x="1027.70" y="105.13" width="3" height="6.6" fill="#10aee0"/><rect x="1027.70" y="114.92" width="3" height="6.6" fill="#10aee0"/><rect x="1027.70" y="124.71" width="3" height="6.6" fill="#10aee0"/><rect x="1027.70" y="134.50" width="3" height="6.6" fill="#10aee0"/><rect x="1027.70" y="144.29" width="3" height="6.6" fill="#10aee0"/><rect x="1027.70" y="154.08" width="3" height="6.6" fill="#10aee0"/><rect x="1027.70" y="163.87" width="3" height="6.6" fill="#10aee0"/><rect x="1027.70" y="173.66" width="3" height="6.6" fill="#10aee0"/><rect x="1027.70" y="183.45" width="3" height="6.6" fill="#10aee0"/><rect x="1035.45" y="34.3" width="1" height="157.2" fill="#080500"/><rect x="1038.65" y="36.60" width="3" height="6.6" fill="#10aee0"/><rect x="1038.65" y="46.39" width="3" height="6.6" fill="#10aee0"/><rect x="1038.65" y="56.18" width="3" height="6.6" fill="#10aee0"/><rect x="1038.65" y="65.97" width="3" height="6.6" fill="#10aee0"/><rect x="1038.65" y="75.76" width="3" height="6.6" fill="#10aee0"/><rect x="1038.65" y="85.55" width="3" height="6.6" fill="#10aee0"/><rect x="1038.65" y="95.34" width="3" height="6.6" fill="#10aee0"/><rect x="1038.65" y="105.13" width="3" height="6.6" fill="#10aee0"/><rect x="1038.65" y="114.92" width="3" height="6.6" fill="#10aee0"/><rect x="1038.65" y="124.71" width="3" height="6.6" fill="#10aee0"/><rect x="1038.65" y="134.50" width="3" height="6.6" fill="#10aee0"/><rect x="1038.65" y="144.29" width="3" height="6.6" fill="#10aee0"/><rect x="1038.65" y="154.08" width="3" height="6.6" fill="#10aee0"/><rect x="1038.65" y="163.87" width="3" height="6.6" fill="#10aee0"/><rect x="1038.65" y="173.66" width="3" height="6.6" fill="#10aee0"/><rect x="1038.65" y="183.45" width="3" height="6.6" fill="#10aee0"/><rect x="1049.55" y="36.60" width="3" height="6.6" fill="#10aee0"/><rect x="1049.55" y="46.39" width="3" height="6.6" fill="#10aee0"/><rect x="1049.55" y="56.18" width="3" height="6.6" fill="#10aee0"/><rect x="1049.55" y="65.97" width="3" height="6.6" fill="#10aee0"/><rect x="1049.55" y="75.76" width="3" height="6.6" fill="#10aee0"/><rect x="1049.55" y="85.55" width="3" height="6.6" fill="#10aee0"/><rect x="1049.55" y="95.34" width="3" height="6.6" fill="#10aee0"/><rect x="1049.55" y="105.13" width="3" height="6.6" fill="#10aee0"/><rect x="1049.55" y="114.92" width="3" height="6.6" fill="#10aee0"/><rect x="1049.55" y="124.71" width="3" height="6.6" fill="#10aee0"/><rect x="1049.55" y="134.50" width="3" height="6.6" fill="#10aee0"/><rect x="1049.55" y="144.29" width="3" height="6.6" fill="#10aee0"/><rect x="1049.55" y="154.08" width="3" height="6.6" fill="#10aee0"/><rect x="1049.55" y="163.87" width="3" height="6.6" fill="#10aee0"/><rect x="1049.55" y="173.66" width="3" height="6.6" fill="#10aee0"/><rect x="1049.55" y="183.45" width="3" height="6.6" fill="#10aee0"/><rect x="1058.35" y="36.60" width="3" height="6.6" fill="#10aee0"/><rect x="1058.35" y="46.39" width="3" height="6.6" fill="#10aee0"/><rect x="1058.35" y="56.18" width="3" height="6.6" fill="#10aee0"/><rect x="1058.35" y="65.97" width="3" height="6.6" fill="#10aee0"/><rect x="1058.35" y="75.76" width="3" height="6.6" fill="#10aee0"/><rect x="1058.35" y="85.55" width="3" height="6.6" fill="#10aee0"/><rect x="1058.35" y="95.34" width="3" height="6.6" fill="#10aee0"/><rect x="1058.35" y="105.13" width="3" height="6.6" fill="#10aee0"/><rect x="1058.35" y="114.92" width="3" height="6.6" fill="#10aee0"/><rect x="1058.35" y="124.71" width="3" height="6.6" fill="#10aee0"/><rect x="1058.35" y="134.50" width="3" height="6.6" fill="#10aee0"/><rect x="1058.35" y="144.29" width="3" height="6.6" fill="#10aee0"/><rect x="1058.35" y="154.08" width="3" height="6.6" fill="#10aee0"/><rect x="1058.35" y="163.87" width="3" height="6.6" fill="#10aee0"/><rect x="1058.35" y="173.66" width="3" height="6.6" fill="#10aee0"/><rect x="1058.35" y="183.45" width="3" height="6.6" fill="#10aee0"/></svg>
<div class="t" style="right:323.20px;top:34.72px;font-size:8.3px;color:#d2d2d2;font-weight:normal;">1.64</div>
<div class="t" style="right:323.00px;top:44.72px;font-size:8.3px;color:#d2d2d2;font-weight:normal;">kcarriers</div>
<div class="t" style="right:323.00px;top:80.42px;font-size:8.3px;color:#d2d2d2;font-weight:normal;">Real</div>
<div class="t" style="right:323.00px;top:116.42px;font-size:8.3px;color:#d2d2d2;font-weight:normal;">328</div>
<div class="t" style="right:323.00px;top:126.52px;font-size:8.3px;color:#d2d2d2;font-weight:normal;">carriers</div>
<div class="t" style="right:323.00px;top:136.62px;font-size:8.3px;color:#d2d2d2;font-weight:normal;">/div</div>
<div class="t" style="right:323.00px;top:173.12px;font-size:8.3px;color:#d2d2d2;font-weight:normal;">-1.64</div>
<div class="t" style="right:323.00px;top:183.12px;font-size:8.3px;color:#d2d2d2;font-weight:normal;">kcarriers</div>
<div class="t" style="left:759.70px;top:193.42px;font-size:8.3px;color:#d2d2d2;font-weight:normal;">Start 0  sym</div>
<div class="t" style="right:16.00px;top:193.42px;font-size:8.3px;color:#d2d2d2;font-weight:normal;">Stop 139  sym</div>
<svg class="a" style="left:0;top:0" width="1080" height="438"><rect x="81" y="251.5" width="1" height="158.5" fill="#3a3a3a"/><rect x="111" y="251.5" width="1" height="158.5" fill="#3a3a3a"/><rect x="142" y="251.5" width="1" height="158.5" fill="#3a3a3a"/><rect x="172" y="251.5" width="1" height="158.5" fill="#3a3a3a"/><rect x="203" y="251.5" width="1" height="158.5" fill="#3a3a3a"/><rect x="233" y="251.5" width="1" height="158.5" fill="#3a3a3a"/><rect x="264" y="251.5" width="1" height="158.5" fill="#3a3a3a"/><rect x="294" y="251.5" width="1" height="158.5" fill="#3a3a3a"/><rect x="325" y="251.5" width="1" height="158.5" fill="#3a3a3a"/><rect x="50" y="267" width="306" height="1" fill="#3a3a3a"/><rect x="50" y="283" width="306" height="1" fill="#3a3a3a"/><rect x="50" y="299" width="306" height="1" fill="#3a3a3a"/><rect x="50" y="314" width="306" height="1" fill="#3a3a3a"/><rect x="50" y="330" width="306" height="1" fill="#3a3a3a"/><rect x="50" y="346" width="306" height="1" fill="#3a3a3a"/><rect x="50" y="362" width="306" height="1" fill="#3a3a3a"/><rect x="50" y="378" width="306" height="1" fill="#3a3a3a"/><rect x="50" y="394" width="306" height="1" fill="#3a3a3a"/><rect x="51" y="252.5" width="304" height="156.5" fill="none" stroke="#4a4a4a" stroke-width="2"/></svg>
<svg class="a" style="left:0;top:0" width="1080" height="438" shape-rendering="crispEdges"><defs><clipPath id="cb"><rect x="52" y="253.5" width="302" height="156"/></clipPath></defs><g clip-path="url(#cb)"><polygon shape-rendering="geometricPrecision" points="125.30,279.00 125.10,305.00 123.80,325.00 120.50,340.00 118.00,350.00 115.00,362.00 111.00,378.00 108.80,392.50 106.50,391.30 104.30,393.50 101.00,400.00 97.50,408.50 92.00,409.60 121.00,409.60 124.40,392.00 125.60,350.00" fill="#33ff00"/><polygon shape-rendering="geometricPrecision" points="279.50,279.00 280.00,300.00 281.00,320.00 282.50,332.00 286.00,348.00 290.00,363.00 293.00,376.00 296.00,388.50 299.00,387.30 302.00,389.00 304.00,394.00 306.50,405.00 307.50,408.00 310.00,406.80 313.00,408.30 314.00,409.60 289.00,409.60 287.50,398.00 286.00,392.00 281.00,390.00 279.50,340.00" fill="#33ff00"/><rect x="125" y="282" width="155" height="57" fill="#33ff00"/><g fill="#33ff00"><rect x="125" y="279" width="1" height="4"/><rect x="125" y="338" width="1" height="7"/><rect x="126" y="279" width="1" height="4"/><rect x="126" y="338" width="1" height="5"/><rect x="127" y="280" width="1" height="3"/><rect x="127" y="338" width="1" height="6"/><rect x="128" y="277" width="1" height="6"/><rect x="128" y="338" width="1" height="3"/><rect x="129" y="280" width="1" height="3"/><rect x="129" y="338" width="1" height="9"/><rect x="130" y="279" width="1" height="4"/><rect x="130" y="338" width="1" height="7"/><rect x="131" y="279" width="1" height="4"/><rect x="131" y="338" width="1" height="21"/><rect x="132" y="278" width="1" height="5"/><rect x="132" y="338" width="1" height="13"/><rect x="133" y="280" width="1" height="3"/><rect x="133" y="338" width="1" height="2"/><rect x="134" y="278" width="1" height="5"/><rect x="134" y="338" width="1" height="9"/><rect x="135" y="279" width="1" height="4"/><rect x="135" y="338" width="1" height="3"/><rect x="136" y="278" width="1" height="5"/><rect x="136" y="338" width="1" height="9"/><rect x="137" y="280" width="1" height="3"/><rect x="137" y="338" width="1" height="6"/><rect x="138" y="279" width="1" height="4"/><rect x="138" y="338" width="1" height="3"/><rect x="139" y="279" width="1" height="4"/><rect x="139" y="338" width="1" height="11"/><rect x="140" y="279" width="1" height="4"/><rect x="140" y="338" width="1" height="20"/><rect x="141" y="279" width="1" height="4"/><rect x="141" y="338" width="1" height="25"/><rect x="142" y="279" width="1" height="4"/><rect x="142" y="338" width="1" height="6"/><rect x="143" y="278" width="1" height="5"/><rect x="143" y="338" width="1" height="17"/><rect x="144" y="278" width="1" height="5"/><rect x="144" y="338" width="1" height="2"/><rect x="145" y="280" width="1" height="3"/><rect x="145" y="338" width="1" height="17"/><rect x="146" y="280" width="1" height="3"/><rect x="146" y="338" width="1" height="5"/><rect x="147" y="279" width="1" height="4"/><rect x="147" y="338" width="1" height="6"/><rect x="148" y="278" width="1" height="5"/><rect x="148" y="338" width="1" height="8"/><rect x="149" y="279" width="1" height="4"/><rect x="149" y="338" width="1" height="15"/><rect x="150" y="279" width="1" height="4"/><rect x="150" y="338" width="1" height="10"/><rect x="151" y="278" width="1" height="5"/><rect x="151" y="338" width="1" height="5"/><rect x="152" y="280" width="1" height="3"/><rect x="152" y="338" width="1" height="7"/><rect x="153" y="280" width="1" height="3"/><rect x="153" y="338" width="1" height="14"/><rect x="154" y="280" width="1" height="3"/><rect x="154" y="338" width="1" height="9"/><rect x="155" y="279" width="1" height="4"/><rect x="155" y="338" width="1" height="16"/><rect x="156" y="279" width="1" height="4"/><rect x="156" y="338" width="1" height="12"/><rect x="157" y="279" width="1" height="4"/><rect x="157" y="338" width="1" height="25"/><rect x="158" y="279" width="1" height="4"/><rect x="158" y="338" width="1" height="10"/><rect x="159" y="280" width="1" height="3"/><rect x="159" y="338" width="1" height="5"/><rect x="160" y="280" width="1" height="3"/><rect x="160" y="338" width="1" height="4"/><rect x="161" y="278" width="1" height="5"/><rect x="161" y="338" width="1" height="13"/><rect x="162" y="278" width="1" height="5"/><rect x="162" y="338" width="1" height="14"/><rect x="163" y="280" width="1" height="3"/><rect x="163" y="338" width="1" height="16"/><rect x="164" y="280" width="1" height="3"/><rect x="164" y="338" width="1" height="5"/><rect x="165" y="279" width="1" height="4"/><rect x="165" y="338" width="1" height="8"/><rect x="166" y="279" width="1" height="4"/><rect x="166" y="338" width="1" height="7"/><rect x="167" y="280" width="1" height="3"/><rect x="167" y="338" width="1" height="10"/><rect x="168" y="279" width="1" height="4"/><rect x="168" y="338" width="1" height="3"/><rect x="169" y="278" width="1" height="5"/><rect x="169" y="338" width="1" height="19"/><rect x="170" y="279" width="1" height="4"/><rect x="170" y="338" width="1" height="3"/><rect x="171" y="279" width="1" height="4"/><rect x="171" y="338" width="1" height="2"/><rect x="172" y="278" width="1" height="5"/><rect x="172" y="338" width="1" height="10"/><rect x="173" y="279" width="1" height="4"/><rect x="173" y="338" width="1" height="18"/><rect x="174" y="278" width="1" height="5"/><rect x="174" y="338" width="1" height="6"/><rect x="175" y="280" width="1" height="3"/><rect x="175" y="338" width="1" height="18"/><rect x="176" y="280" width="1" height="3"/><rect x="176" y="338" width="1" height="5"/><rect x="177" y="279" width="1" height="4"/><rect x="177" y="338" width="1" height="6"/><rect x="178" y="279" width="1" height="4"/><rect x="178" y="338" width="1" height="2"/><rect x="179" y="280" width="1" height="3"/><rect x="179" y="338" width="1" height="12"/><rect x="180" y="280" width="1" height="3"/><rect x="180" y="338" width="1" height="10"/><rect x="181" y="280" width="1" height="3"/><rect x="181" y="338" width="1" height="9"/><rect x="182" y="280" width="1" height="3"/><rect x="182" y="338" width="1" height="9"/><rect x="183" y="279" width="1" height="4"/><rect x="183" y="338" width="1" height="2"/><rect x="184" y="277" width="1" height="6"/><rect x="184" y="338" width="1" height="10"/><rect x="185" y="279" width="1" height="4"/><rect x="185" y="338" width="1" height="8"/><rect x="186" y="280" width="1" height="3"/><rect x="186" y="338" width="1" height="8"/><rect x="187" y="280" width="1" height="3"/><rect x="187" y="338" width="1" height="2"/><rect x="188" y="277" width="1" height="6"/><rect x="188" y="338" width="1" height="5"/><rect x="189" y="279" width="1" height="4"/><rect x="189" y="338" width="1" height="4"/><rect x="190" y="280" width="1" height="3"/><rect x="190" y="338" width="1" height="6"/><rect x="191" y="279" width="1" height="4"/><rect x="191" y="338" width="1" height="12"/><rect x="192" y="279" width="1" height="4"/><rect x="192" y="338" width="1" height="5"/><rect x="193" y="278" width="1" height="5"/><rect x="193" y="338" width="1" height="14"/><rect x="194" y="279" width="1" height="4"/><rect x="194" y="338" width="1" height="2"/><rect x="195" y="279" width="1" height="4"/><rect x="195" y="338" width="1" height="14"/><rect x="196" y="279" width="1" height="4"/><rect x="196" y="338" width="1" height="14"/><rect x="197" y="278" width="1" height="5"/><rect x="197" y="338" width="1" height="29"/><rect x="198" y="278" width="1" height="5"/><rect x="198" y="338" width="1" height="12"/><rect x="199" y="277" width="1" height="6"/><rect x="199" y="338" width="1" height="3"/><rect x="200" y="279" width="1" height="4"/><rect x="200" y="338" width="1" height="9"/><rect x="201" y="279" width="1" height="4"/><rect x="201" y="338" width="1" height="11"/><rect x="202" y="279" width="1" height="4"/><rect x="202" y="338" width="1" height="4"/><rect x="203" y="280" width="1" height="3"/><rect x="203" y="338" width="1" height="16"/><rect x="204" y="279" width="1" height="4"/><rect x="204" y="338" width="1" height="13"/><rect x="205" y="280" width="1" height="3"/><rect x="205" y="338" width="1" height="28"/><rect x="206" y="277" width="1" height="6"/><rect x="206" y="338" width="1" height="14"/><rect x="207" y="280" width="1" height="3"/><rect x="207" y="338" width="1" height="12"/><rect x="208" y="279" width="1" height="4"/><rect x="208" y="338" width="1" height="4"/><rect x="209" y="280" width="1" height="3"/><rect x="209" y="338" width="1" height="9"/><rect x="210" y="279" width="1" height="4"/><rect x="210" y="338" width="1" height="24"/><rect x="211" y="278" width="1" height="5"/><rect x="211" y="338" width="1" height="13"/><rect x="212" y="279" width="1" height="4"/><rect x="212" y="338" width="1" height="11"/><rect x="213" y="279" width="1" height="4"/><rect x="213" y="338" width="1" height="1"/><rect x="214" y="280" width="1" height="3"/><rect x="214" y="338" width="1" height="10"/><rect x="215" y="279" width="1" height="4"/><rect x="215" y="338" width="1" height="5"/><rect x="216" y="277" width="1" height="6"/><rect x="216" y="338" width="1" height="15"/><rect x="217" y="280" width="1" height="3"/><rect x="217" y="338" width="1" height="2"/><rect x="218" y="280" width="1" height="3"/><rect x="218" y="338" width="1" height="5"/><rect x="219" y="279" width="1" height="4"/><rect x="219" y="338" width="1" height="12"/><rect x="220" y="279" width="1" height="4"/><rect x="220" y="338" width="1" height="9"/><rect x="221" y="280" width="1" height="3"/><rect x="221" y="338" width="1" height="8"/><rect x="222" y="279" width="1" height="4"/><rect x="222" y="338" width="1" height="5"/><rect x="223" y="278" width="1" height="5"/><rect x="223" y="338" width="1" height="17"/><rect x="224" y="280" width="1" height="3"/><rect x="224" y="338" width="1" height="1"/><rect x="225" y="279" width="1" height="4"/><rect x="225" y="338" width="1" height="10"/><rect x="226" y="280" width="1" height="3"/><rect x="226" y="338" width="1" height="15"/><rect x="227" y="279" width="1" height="4"/><rect x="227" y="338" width="1" height="4"/><rect x="228" y="279" width="1" height="4"/><rect x="228" y="338" width="1" height="19"/><rect x="229" y="278" width="1" height="5"/><rect x="229" y="338" width="1" height="6"/><rect x="230" y="279" width="1" height="4"/><rect x="230" y="338" width="1" height="4"/><rect x="231" y="277" width="1" height="6"/><rect x="231" y="338" width="1" height="7"/><rect x="232" y="277" width="1" height="6"/><rect x="232" y="338" width="1" height="14"/><rect x="233" y="279" width="1" height="4"/><rect x="233" y="338" width="1" height="8"/><rect x="234" y="278" width="1" height="5"/><rect x="234" y="338" width="1" height="9"/><rect x="235" y="278" width="1" height="5"/><rect x="235" y="338" width="1" height="5"/><rect x="236" y="279" width="1" height="4"/><rect x="236" y="338" width="1" height="17"/><rect x="237" y="280" width="1" height="3"/><rect x="237" y="338" width="1" height="7"/><rect x="238" y="279" width="1" height="4"/><rect x="238" y="338" width="1" height="17"/><rect x="239" y="280" width="1" height="3"/><rect x="239" y="338" width="1" height="21"/><rect x="240" y="278" width="1" height="5"/><rect x="240" y="338" width="1" height="3"/><rect x="241" y="278" width="1" height="5"/><rect x="241" y="338" width="1" height="13"/><rect x="242" y="280" width="1" height="3"/><rect x="242" y="338" width="1" height="9"/><rect x="243" y="280" width="1" height="3"/><rect x="243" y="338" width="1" height="7"/><rect x="244" y="279" width="1" height="4"/><rect x="244" y="338" width="1" height="10"/><rect x="245" y="279" width="1" height="4"/><rect x="245" y="338" width="1" height="14"/><rect x="246" y="280" width="1" height="3"/><rect x="246" y="338" width="1" height="10"/><rect x="247" y="279" width="1" height="4"/><rect x="247" y="338" width="1" height="12"/><rect x="248" y="279" width="1" height="4"/><rect x="248" y="338" width="1" height="8"/><rect x="249" y="279" width="1" height="4"/><rect x="249" y="338" width="1" height="12"/><rect x="250" y="279" width="1" height="4"/><rect x="250" y="338" width="1" height="7"/><rect x="251" y="279" width="1" height="4"/><rect x="251" y="338" width="1" height="9"/><rect x="252" y="280" width="1" height="3"/><rect x="252" y="338" width="1" height="5"/><rect x="253" y="280" width="1" height="3"/><rect x="253" y="338" width="1" height="5"/><rect x="254" y="278" width="1" height="5"/><rect x="254" y="338" width="1" height="5"/><rect x="255" y="279" width="1" height="4"/><rect x="255" y="338" width="1" height="7"/><rect x="256" y="280" width="1" height="3"/><rect x="256" y="338" width="1" height="21"/><rect x="257" y="280" width="1" height="3"/><rect x="257" y="338" width="1" height="16"/><rect x="258" y="278" width="1" height="5"/><rect x="258" y="338" width="1" height="21"/><rect x="259" y="280" width="1" height="3"/><rect x="259" y="338" width="1" height="24"/><rect x="260" y="279" width="1" height="4"/><rect x="260" y="338" width="1" height="23"/><rect x="261" y="280" width="1" height="3"/><rect x="261" y="338" width="1" height="5"/><rect x="262" y="279" width="1" height="4"/><rect x="262" y="338" width="1" height="17"/><rect x="263" y="279" width="1" height="4"/><rect x="263" y="338" width="1" height="5"/><rect x="264" y="279" width="1" height="4"/><rect x="264" y="338" width="1" height="7"/><rect x="265" y="279" width="1" height="4"/><rect x="265" y="338" width="1" height="10"/><rect x="266" y="277" width="1" height="6"/><rect x="266" y="338" width="1" height="7"/><rect x="267" y="279" width="1" height="4"/><rect x="267" y="338" width="1" height="10"/><rect x="268" y="280" width="1" height="3"/><rect x="268" y="338" width="1" height="23"/><rect x="269" y="280" width="1" height="3"/><rect x="269" y="338" width="1" height="6"/><rect x="270" y="279" width="1" height="4"/><rect x="270" y="338" width="1" height="5"/><rect x="271" y="279" width="1" height="4"/><rect x="271" y="338" width="1" height="7"/><rect x="272" y="275" width="1" height="8"/><rect x="272" y="338" width="1" height="12"/><rect x="273" y="280" width="1" height="3"/><rect x="273" y="338" width="1" height="12"/><rect x="274" y="278" width="1" height="5"/><rect x="274" y="338" width="1" height="13"/><rect x="275" y="279" width="1" height="4"/><rect x="275" y="338" width="1" height="5"/><rect x="276" y="280" width="1" height="3"/><rect x="276" y="338" width="1" height="11"/><rect x="277" y="280" width="1" height="3"/><rect x="277" y="338" width="1" height="4"/><rect x="278" y="280" width="1" height="3"/><rect x="278" y="338" width="1" height="4"/><rect x="279" y="279" width="1" height="4"/><rect x="279" y="338" width="1" height="7"/></g><g fill="#1f9a00"><rect x="125" y="345" width="1" height="8"/><rect x="126" y="343" width="1" height="7"/><rect x="127" y="278" width="1" height="2"/><rect x="127" y="344" width="1" height="8"/><rect x="128" y="341" width="1" height="7"/><rect x="129" y="279" width="1" height="1"/><rect x="129" y="347" width="1" height="8"/><rect x="130" y="277" width="1" height="2"/><rect x="130" y="345" width="1" height="1"/><rect x="131" y="359" width="1" height="6"/><rect x="132" y="276" width="1" height="2"/><rect x="132" y="351" width="1" height="5"/><rect x="133" y="340" width="1" height="42"/><rect x="134" y="276" width="1" height="2"/><rect x="134" y="347" width="1" height="11"/><rect x="135" y="278" width="1" height="1"/><rect x="135" y="341" width="1" height="3"/><rect x="136" y="276" width="1" height="2"/><rect x="136" y="347" width="1" height="7"/><rect x="137" y="344" width="1" height="10"/><rect x="138" y="341" width="1" height="5"/><rect x="139" y="349" width="1" height="8"/><rect x="140" y="358" width="1" height="17"/><rect x="141" y="278" width="1" height="1"/><rect x="141" y="363" width="1" height="1"/><rect x="142" y="344" width="1" height="10"/><rect x="143" y="355" width="1" height="9"/><rect x="144" y="340" width="1" height="5"/><rect x="145" y="355" width="1" height="13"/><rect x="146" y="343" width="1" height="18"/><rect x="147" y="278" width="1" height="1"/><rect x="147" y="344" width="1" height="20"/><rect x="148" y="277" width="1" height="1"/><rect x="148" y="346" width="1" height="17"/><rect x="149" y="277" width="1" height="2"/><rect x="149" y="353" width="1" height="16"/><rect x="150" y="348" width="1" height="5"/><rect x="151" y="343" width="1" height="11"/><rect x="152" y="345" width="1" height="3"/><rect x="153" y="278" width="1" height="2"/><rect x="153" y="352" width="1" height="3"/><rect x="154" y="278" width="1" height="2"/><rect x="154" y="347" width="1" height="7"/><rect x="155" y="354" width="1" height="46"/><rect x="156" y="350" width="1" height="16"/><rect x="157" y="363" width="1" height="2"/><rect x="158" y="348" width="1" height="32"/><rect x="159" y="343" width="1" height="10"/><rect x="160" y="342" width="1" height="2"/><rect x="161" y="351" width="1" height="40"/><rect x="162" y="352" width="1" height="8"/><rect x="163" y="354" width="1" height="11"/><rect x="164" y="278" width="1" height="2"/><rect x="164" y="343" width="1" height="8"/><rect x="165" y="346" width="1" height="16"/><rect x="166" y="345" width="1" height="14"/><rect x="167" y="278" width="1" height="2"/><rect x="167" y="348" width="1" height="7"/><rect x="168" y="341" width="1" height="15"/><rect x="169" y="357" width="1" height="3"/><rect x="170" y="341" width="1" height="16"/><rect x="171" y="277" width="1" height="2"/><rect x="171" y="340" width="1" height="3"/><rect x="172" y="277" width="1" height="1"/><rect x="172" y="348" width="1" height="4"/><rect x="173" y="277" width="1" height="2"/><rect x="173" y="356" width="1" height="5"/><rect x="174" y="344" width="1" height="35"/><rect x="175" y="278" width="1" height="2"/><rect x="175" y="356" width="1" height="5"/><rect x="176" y="278" width="1" height="2"/><rect x="176" y="343" width="1" height="4"/><rect x="177" y="277" width="1" height="2"/><rect x="177" y="344" width="1" height="17"/><rect x="178" y="277" width="1" height="2"/><rect x="178" y="340" width="1" height="6"/><rect x="179" y="350" width="1" height="5"/><rect x="180" y="348" width="1" height="5"/><rect x="181" y="279" width="1" height="1"/><rect x="181" y="347" width="1" height="13"/><rect x="182" y="278" width="1" height="2"/><rect x="182" y="347" width="1" height="3"/><rect x="183" y="277" width="1" height="2"/><rect x="183" y="340" width="1" height="9"/><rect x="184" y="348" width="1" height="6"/><rect x="185" y="278" width="1" height="1"/><rect x="185" y="346" width="1" height="6"/><rect x="186" y="279" width="1" height="1"/><rect x="186" y="346" width="1" height="5"/><rect x="187" y="340" width="1" height="7"/><rect x="188" y="275" width="1" height="2"/><rect x="188" y="343" width="1" height="10"/><rect x="189" y="278" width="1" height="1"/><rect x="189" y="342" width="1" height="8"/><rect x="190" y="279" width="1" height="1"/><rect x="190" y="344" width="1" height="1"/><rect x="191" y="277" width="1" height="2"/><rect x="191" y="350" width="1" height="5"/><rect x="192" y="277" width="1" height="2"/><rect x="192" y="343" width="1" height="15"/><rect x="193" y="352" width="1" height="15"/><rect x="194" y="278" width="1" height="1"/><rect x="194" y="340" width="1" height="1"/><rect x="195" y="352" width="1" height="10"/><rect x="196" y="352" width="1" height="14"/><rect x="197" y="277" width="1" height="1"/><rect x="197" y="367" width="1" height="1"/><rect x="198" y="276" width="1" height="2"/><rect x="198" y="350" width="1" height="8"/><rect x="199" y="275" width="1" height="2"/><rect x="199" y="341" width="1" height="7"/><rect x="200" y="347" width="1" height="7"/><rect x="201" y="349" width="1" height="6"/><rect x="202" y="342" width="1" height="1"/><rect x="203" y="278" width="1" height="2"/><rect x="203" y="354" width="1" height="8"/><rect x="204" y="351" width="1" height="26"/><rect x="205" y="278" width="1" height="2"/><rect x="205" y="366" width="1" height="13"/><rect x="206" y="352" width="1" height="4"/><rect x="207" y="350" width="1" height="12"/><rect x="208" y="277" width="1" height="2"/><rect x="208" y="342" width="1" height="43"/><rect x="209" y="347" width="1" height="14"/><rect x="210" y="362" width="1" height="6"/><rect x="211" y="351" width="1" height="2"/><rect x="212" y="349" width="1" height="3"/><rect x="213" y="277" width="1" height="2"/><rect x="213" y="339" width="1" height="13"/><rect x="214" y="348" width="1" height="6"/><rect x="215" y="278" width="1" height="1"/><rect x="215" y="343" width="1" height="4"/><rect x="216" y="353" width="1" height="10"/><rect x="217" y="279" width="1" height="1"/><rect x="217" y="340" width="1" height="14"/><rect x="218" y="343" width="1" height="6"/><rect x="219" y="277" width="1" height="2"/><rect x="219" y="350" width="1" height="10"/><rect x="220" y="347" width="1" height="4"/><rect x="221" y="346" width="1" height="12"/><rect x="222" y="343" width="1" height="1"/><rect x="223" y="355" width="1" height="7"/><rect x="224" y="278" width="1" height="2"/><rect x="224" y="339" width="1" height="17"/><rect x="225" y="278" width="1" height="1"/><rect x="225" y="348" width="1" height="3"/><rect x="226" y="353" width="1" height="40"/><rect x="227" y="278" width="1" height="1"/><rect x="227" y="342" width="1" height="7"/><rect x="228" y="277" width="1" height="2"/><rect x="228" y="357" width="1" height="38"/><rect x="229" y="344" width="1" height="6"/><rect x="230" y="342" width="1" height="8"/><rect x="231" y="275" width="1" height="2"/><rect x="231" y="345" width="1" height="4"/><rect x="232" y="352" width="1" height="6"/><rect x="233" y="346" width="1" height="10"/><rect x="234" y="347" width="1" height="29"/><rect x="235" y="343" width="1" height="11"/><rect x="236" y="355" width="1" height="1"/><rect x="237" y="345" width="1" height="2"/><rect x="238" y="355" width="1" height="27"/><rect x="239" y="359" width="1" height="16"/><rect x="240" y="277" width="1" height="1"/><rect x="240" y="341" width="1" height="8"/><rect x="241" y="276" width="1" height="2"/><rect x="241" y="351" width="1" height="21"/><rect x="242" y="347" width="1" height="10"/><rect x="243" y="345" width="1" height="6"/><rect x="244" y="277" width="1" height="2"/><rect x="244" y="348" width="1" height="6"/><rect x="245" y="352" width="1" height="8"/><rect x="246" y="348" width="1" height="3"/><rect x="247" y="350" width="1" height="10"/><rect x="248" y="346" width="1" height="2"/><rect x="249" y="350" width="1" height="13"/><rect x="250" y="345" width="1" height="7"/><rect x="251" y="277" width="1" height="2"/><rect x="251" y="347" width="1" height="3"/><rect x="252" y="279" width="1" height="1"/><rect x="252" y="343" width="1" height="14"/><rect x="253" y="343" width="1" height="4"/><rect x="254" y="277" width="1" height="1"/><rect x="254" y="343" width="1" height="17"/><rect x="255" y="345" width="1" height="35"/><rect x="256" y="278" width="1" height="2"/><rect x="256" y="359" width="1" height="2"/><rect x="257" y="354" width="1" height="4"/><rect x="258" y="276" width="1" height="2"/><rect x="258" y="359" width="1" height="13"/><rect x="259" y="278" width="1" height="2"/><rect x="259" y="362" width="1" height="7"/><rect x="260" y="361" width="1" height="5"/><rect x="261" y="278" width="1" height="2"/><rect x="261" y="343" width="1" height="10"/><rect x="262" y="355" width="1" height="2"/><rect x="263" y="343" width="1" height="3"/><rect x="264" y="345" width="1" height="8"/><rect x="265" y="278" width="1" height="1"/><rect x="265" y="348" width="1" height="15"/><rect x="266" y="275" width="1" height="2"/><rect x="266" y="345" width="1" height="5"/><rect x="267" y="348" width="1" height="1"/><rect x="268" y="361" width="1" height="5"/><rect x="269" y="344" width="1" height="6"/><rect x="270" y="343" width="1" height="7"/><rect x="271" y="345" width="1" height="6"/><rect x="272" y="350" width="1" height="18"/><rect x="273" y="350" width="1" height="11"/><rect x="274" y="276" width="1" height="2"/><rect x="274" y="351" width="1" height="8"/><rect x="275" y="343" width="1" height="24"/><rect x="276" y="349" width="1" height="24"/><rect x="277" y="342" width="1" height="7"/><rect x="278" y="279" width="1" height="1"/><rect x="278" y="342" width="1" height="32"/><rect x="279" y="278" width="1" height="1"/><rect x="279" y="345" width="1" height="3"/></g><g fill="#33ff00"><rect x="281" y="392" width="1" height="13"/><rect x="283" y="394" width="1" height="15"/><rect x="284" y="395" width="1" height="10"/><rect x="286" y="397" width="1" height="13"/></g></g></svg>
<div class="t" style="left:50.00px;top:241.62px;font-size:8.3px;color:#d2d2d2;font-weight:normal;">Rng 10 dBm</div>
<div class="t" style="right:1032.20px;top:252.22px;font-size:8.3px;color:#d2d2d2;font-weight:normal;">20</div>
<div class="t" style="right:1032.20px;top:262.22px;font-size:8.3px;color:#d2d2d2;font-weight:normal;">dBm</div>
<div class="t" style="right:1032.20px;top:296.62px;font-size:8.3px;color:#d2d2d2;font-weight:normal;">LogMag</div>
<div class="t" style="right:1032.20px;top:334.42px;font-size:8.3px;color:#d2d2d2;font-weight:normal;">10</div>
<div class="t" style="right:1032.20px;top:344.52px;font-size:8.3px;color:#d2d2d2;font-weight:normal;">dB</div>
<div class="t" style="right:1032.20px;top:354.62px;font-size:8.3px;color:#d2d2d2;font-weight:normal;">/div</div>
<div class="t" style="right:1032.20px;top:390.12px;font-size:8.3px;color:#d2d2d2;font-weight:normal;">-80</div>
<div class="t" style="right:1032.20px;top:400.12px;font-size:8.3px;color:#d2d2d2;font-weight:normal;">dBm</div>
<div class="t" style="left:50.00px;top:410.82px;font-size:8.3px;color:#d2d2d2;font-weight:normal;">Center 1 GHz</div>
<div class="t" style="left:50.00px;top:420.82px;font-size:8.3px;color:#d2d2d2;font-weight:normal;">Res BW 381.936  Hz</div>
<div class="t" style="right:725.00px;top:410.82px;font-size:8.3px;color:#d2d2d2;font-weight:normal;">Span 96 MHz</div>
<div class="t" style="right:725.00px;top:420.82px;font-size:8.3px;color:#d2d2d2;font-weight:normal;">TimeLen 10 mSec</div>
<svg class="a" style="left:0;top:0" width="1080" height="438"><rect x="435" y="252" width="1" height="158" fill="#3a3a3a"/><rect x="466" y="252" width="1" height="158" fill="#3a3a3a"/><rect x="496" y="252" width="1" height="158" fill="#3a3a3a"/><rect x="527" y="252" width="1" height="158" fill="#3a3a3a"/><rect x="557" y="252" width="1" height="158" fill="#3a3a3a"/><rect x="587" y="252" width="1" height="158" fill="#3a3a3a"/><rect x="618" y="252" width="1" height="158" fill="#3a3a3a"/><rect x="648" y="252" width="1" height="158" fill="#3a3a3a"/><rect x="679" y="252" width="1" height="158" fill="#3a3a3a"/><rect x="405" y="267" width="305" height="1" fill="#3a3a3a"/><rect x="405" y="283" width="305" height="1" fill="#3a3a3a"/><rect x="405" y="299" width="305" height="1" fill="#3a3a3a"/><rect x="405" y="315" width="305" height="1" fill="#3a3a3a"/><rect x="405" y="331" width="305" height="1" fill="#3a3a3a"/><rect x="405" y="346" width="305" height="1" fill="#3a3a3a"/><rect x="405" y="362" width="305" height="1" fill="#3a3a3a"/><rect x="405" y="378" width="305" height="1" fill="#3a3a3a"/><rect x="405" y="394" width="305" height="1" fill="#3a3a3a"/><rect x="406" y="253" width="303" height="156" fill="none" stroke="#4a4a4a" stroke-width="2"/></svg>
<div class="t" style="left:404.60px;top:241.62px;font-size:8.3px;color:#d2d2d2;font-weight:normal;">Rng 10 dBm</div>
<div class="t" style="right:677.50px;top:252.22px;font-size:8.3px;color:#d2d2d2;font-weight:normal;">5</div>
<div class="t" style="right:677.50px;top:262.22px;font-size:8.3px;color:#d2d2d2;font-weight:normal;">%</div>
<div class="t" style="right:677.50px;top:296.62px;font-size:8.3px;color:#d2d2d2;font-weight:normal;">LinMag</div>
<div class="t" style="right:677.50px;top:334.42px;font-size:8.3px;color:#d2d2d2;font-weight:normal;">500</div>
<div class="t" style="right:677.50px;top:344.52px;font-size:8.3px;color:#d2d2d2;font-weight:normal;">m%</div>
<div class="t" style="right:677.50px;top:354.62px;font-size:8.3px;color:#d2d2d2;font-weight:normal;">/div</div>
<div class="t" style="right:677.50px;top:390.12px;font-size:8.3px;color:#d2d2d2;font-weight:normal;">0</div>
<div class="t" style="right:677.50px;top:400.12px;font-size:8.3px;color:#d2d2d2;font-weight:normal;">%</div>
<div class="t" style="left:405.50px;top:410.82px;font-size:8.3px;color:#d2d2d2;font-weight:normal;">Start -1.62 kcarrier</div>
<div class="t" style="left:405.50px;top:420.82px;font-size:8.3px;color:#d2d2d2;font-weight:normal;">Res BW 15 kHz</div>
<div class="t" style="right:370.70px;top:410.82px;font-size:8.3px;color:#d2d2d2;font-weight:normal;">Stop 1.619 kcarrier</div>
<div class="t" style="right:370.70px;top:420.82px;font-size:8.3px;color:#d2d2d2;font-weight:normal;">TimeLen 140  Sym</div>
<svg class="a" style="left:0;top:0" width="1080" height="438"><rect x="405" y="409" width="305" height="1.6" fill="#fffbef"/><rect x="405" y="408" width="304.5" height="1" fill="#d49a00"/><rect x="405" y="408" width="4.5" height="1.3" fill="#30b0d0"/><rect x="597.5" y="408" width="1" height="1.3" fill="#5a4000"/><rect x="522.2" y="408" width="1" height="1.3" fill="#5a4000"/><rect x="688.6" y="408" width="1" height="1.3" fill="#5a4000"/><rect x="605.8" y="408" width="1" height="1.3" fill="#5a4000"/><rect x="428.3" y="408" width="1" height="1.3" fill="#000000"/><rect x="641.1" y="408" width="1" height="1.3" fill="#2090b0"/><rect x="605.0" y="408" width="1" height="1.3" fill="#2090b0"/><rect x="452.3" y="408" width="1" height="1.3" fill="#000000"/><rect x="667.5" y="408" width="1" height="1.3" fill="#000000"/><rect x="575.0" y="408" width="1" height="1.3" fill="#5a4000"/><rect x="491.1" y="408" width="1" height="1.3" fill="#5a4000"/><rect x="481.8" y="408" width="1" height="1.3" fill="#000000"/><rect x="471.9" y="408" width="1" height="1.3" fill="#000000"/><rect x="465.5" y="408" width="1" height="1.3" fill="#2090b0"/></svg>
<div class="a" style="left:721px;top:239.5px;width:347px;height:22px;background:#3e3e3e"></div>
<div class="a" style="left:788.7px;top:239.5px;width:1px;height:22px;background:#303030"></div>
<div class="a" style="left:824.5px;top:239.5px;width:1px;height:22px;background:#303030"></div>
<div class="a" style="left:878.1px;top:239.5px;width:1px;height:22px;background:#303030"></div>
<div class="a" style="left:921.0px;top:239.5px;width:1px;height:22px;background:#303030"></div>
<div class="a" style="left:956.0px;top:239.5px;width:1px;height:22px;background:#303030"></div>
<div class="a" style="left:991.0px;top:239.5px;width:1px;height:22px;background:#303030"></div>
<div class="a" style="left:1026.0px;top:239.5px;width:1px;height:22px;background:#303030"></div>
<div class="t" style="left:722.00px;top:246.22px;font-size:8.3px;color:#e4e4e4;font-weight:normal;">Name</div>
<div class="t" style="left:791.00px;top:241.42px;font-size:8.3px;color:#e4e4e4;font-weight:normal;">EVM</div>
<div class="t" style="left:791.00px;top:251.52px;font-size:8.3px;color:#e4e4e4;font-weight:normal;">(dB)</div>
<div class="t" style="left:826.20px;top:241.42px;font-size:8.3px;color:#e4e4e4;font-weight:normal;">Power per RE</div>
<div class="t" style="left:826.20px;top:251.52px;font-size:8.3px;color:#e4e4e4;font-weight:normal;">(dBm)</div>
<div class="t" style="left:879.70px;top:246.22px;font-size:8.3px;color:#e4e4e4;font-weight:normal;">Modulation</div>
<div class="t" style="left:922.10px;top:241.42px;font-size:8.3px;color:#e4e4e4;font-weight:normal;">Num. of</div>
<div class="t" style="left:922.10px;top:251.52px;font-size:8.3px;color:#e4e4e4;font-weight:normal;">RBs</div>
<div class="t" style="left:957.50px;top:246.22px;font-size:8.3px;color:#e4e4e4;font-weight:normal;">RNTI</div>
<div class="t" style="left:992.50px;top:246.22px;font-size:8.3px;color:#e4e4e4;font-weight:normal;">BWP ID</div>
<div class="t" style="right:294.20px;top:262.62px;font-size:8.3px;color:#d49400;font-weight:normal;">PUSCH0</div>
<div class="t" style="right:259.30px;top:262.62px;font-size:8.3px;color:#d49400;font-weight:normal;">-88.12</div>
<div class="t" style="right:205.70px;top:262.62px;font-size:8.3px;color:#d49400;font-weight:normal;">10.00</div>
<div class="t" style="right:163.30px;top:262.62px;font-size:8.3px;color:#d49400;font-weight:normal;">QPSK</div>
<div class="t" style="right:128.00px;top:262.62px;font-size:8.3px;color:#d49400;font-weight:normal;">2700</div>
<div class="t" style="right:93.00px;top:262.62px;font-size:8.3px;color:#d49400;font-weight:normal;">0x0</div>
<div class="t" style="right:57.40px;top:262.62px;font-size:8.3px;color:#d49400;font-weight:normal;">0</div>
<div class="t" style="left:722.00px;top:274.72px;font-size:8.3px;color:#1c9cd4;font-weight:normal;">PUSCH0_DMRS</div>
<div class="t" style="right:259.30px;top:274.72px;font-size:8.3px;color:#1c9cd4;font-weight:normal;">-88.48</div>
<div class="t" style="right:205.70px;top:274.72px;font-size:8.3px;color:#1c9cd4;font-weight:normal;">10.00</div>
<div class="t" style="right:163.30px;top:274.72px;font-size:8.3px;color:#1c9cd4;font-weight:normal;">QPSK</div>
<div class="t" style="right:128.00px;top:274.72px;font-size:8.3px;color:#1c9cd4;font-weight:normal;">2700</div>
<div class="t" style="right:93.00px;top:274.72px;font-size:8.3px;color:#1c9cd4;font-weight:normal;">0x0</div>
<div class="t" style="right:57.40px;top:274.72px;font-size:8.3px;color:#1c9cd4;font-weight:normal;">0</div>
</body></html>
